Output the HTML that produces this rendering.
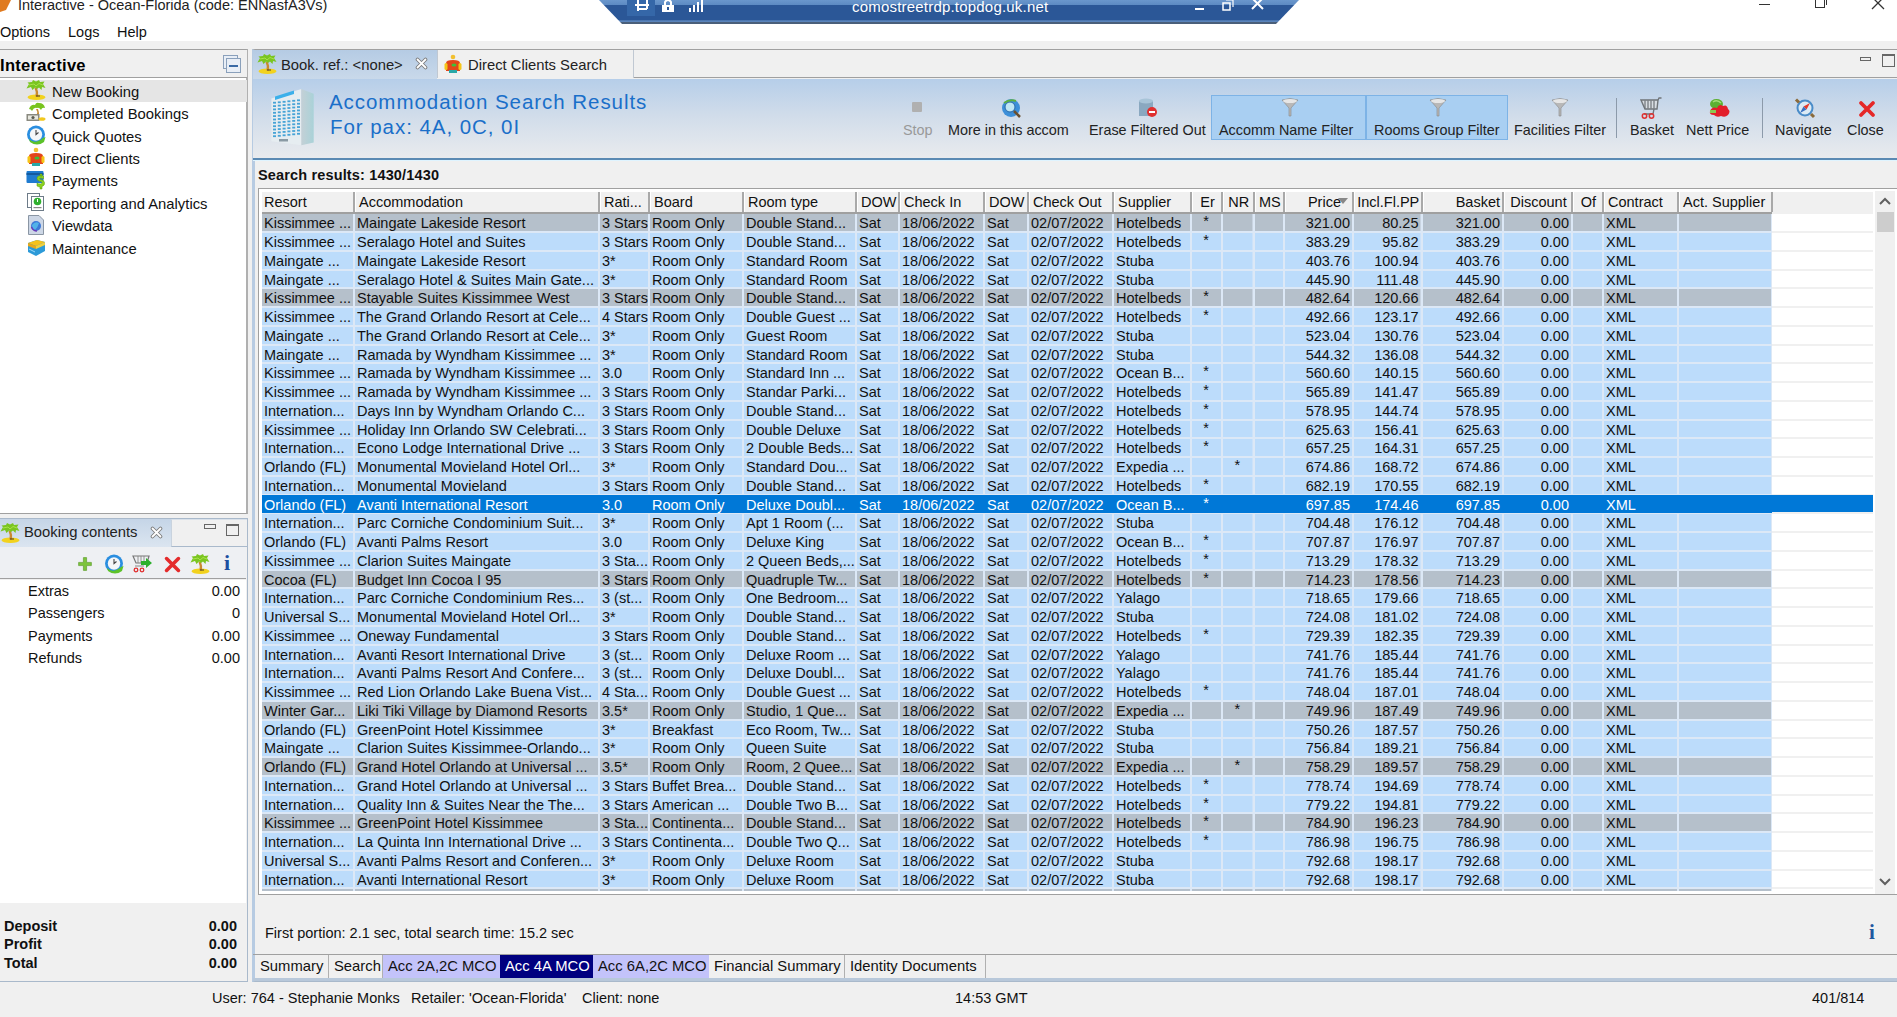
<!DOCTYPE html><html><head><meta charset="utf-8"><style>
*{margin:0;padding:0;box-sizing:border-box}
html,body{width:1897px;height:1017px;overflow:hidden;background:#f0f0f0;font-family:"Liberation Sans",sans-serif;font-size:14.5px;color:#111}
.a{position:absolute}
.t{position:absolute;white-space:nowrap;line-height:18px}
.row{position:absolute;left:262px;width:1510px;height:18.75px;background:#dce8f6}
.c{position:absolute;top:0;height:16.75px;white-space:nowrap;clip-path:inset(-6px 0 -6px 0);line-height:19.2px;padding:0 3px 0 2px}
.rb .c{background:#bcdcfb}
.rg .c{background:#b5c0cb}
.rs{background:#0078d7}
.rs .c{background:#0078d7;color:#fff}
.r{text-align:right;padding-right:2px}
.ce{text-align:center}
.hd{position:absolute;top:192px;height:20px;background:#f0f0f0;line-height:20px;padding:0 1px;white-space:nowrap;overflow:hidden;border-left:1px solid #fff}
.hs{position:absolute;top:192px;width:2px;height:21px;background:#a9a9a9}
.wl{position:absolute;left:1772px;width:101px;height:2px;background:#f0f0f0}
.tbico{position:absolute}
</style></head><body><svg width="0" height="0" style="position:absolute"><defs>
<symbol id="palm" viewBox="0 0 20 20"><ellipse cx="10.5" cy="17.2" rx="9" ry="2.8" fill="#f2d21e"/><path d="M8.5 8 Q10.5 12 9.5 16.5 L12 16.5 Q12.5 11 11 8Z" fill="#c98a2e"/><path d="M0.5 8.5 L3 4 L1.5 2.5 L6 2 L7 0 L10 1.5 L13 0 L14 2 L18.5 1.5 L17 4 L19.5 8 L16 7 L15.5 10 L13 7.5 L11 9 L9 7.5 L6.5 10 L5 7 Z" fill="#7ac520"/><path d="M3 5 L8 4 L10 6 L13 3.5 L17 5" stroke="#a8e24a" stroke-width="1" fill="none"/><path d="M10 16 L14 16" stroke="#4a3a20" stroke-width="1"/></symbol>
<symbol id="compl" viewBox="0 0 20 20"><path d="M3 7 Q5 2 9 3 Q10 0 13 1 Q18 1 19 6 Q16 5 15 8 Q13 5 11 6 Q8 5 6 9 Q5 7 3 7Z" fill="#78c41e"/><path d="M10 7 Q12 10 11 12 L13 12 Q13 10 12 7Z" fill="#c98a2e"/><rect x="0.5" y="12" width="13" height="7" fill="#8a8a80"/><rect x="2" y="13.5" width="10" height="4" fill="#e8e8e0"/><circle cx="7" cy="15.5" r="1.6" fill="#5a5a50"/><ellipse cx="16" cy="17" rx="3.5" ry="1.8" fill="#f2c81e"/></symbol>
<symbol id="clock" viewBox="0 0 20 20"><circle cx="10" cy="9.5" r="9" fill="#2a8ee0"/><circle cx="10" cy="9.5" r="6.2" fill="#f4f6f8"/><path d="M10 5 V9.5 L12.5 7.5" stroke="#444" stroke-width="1.1" fill="none"/><path d="M3 14 Q9 20 17 13 L19.5 12 L18 17 Q11 22 4 17Z" fill="#5cc22a"/></symbol>
<symbol id="person" viewBox="0 0 20 20"><circle cx="10" cy="3" r="2.3" fill="#f2c030"/><path d="M3 9 Q3 6 10 6 Q17 6 17 9 L17 17 L3 17Z" fill="#e2461a"/><rect x="1.5" y="9" width="3" height="7" rx="1.5" fill="#f5c518"/><rect x="15.5" y="9" width="3" height="7" rx="1.5" fill="#f5c518"/><ellipse cx="11" cy="11" rx="2.5" ry="1.5" fill="#3cbf3c"/><rect x="6" y="16" width="8" height="3" fill="#2aa8a8"/></symbol>
<symbol id="pay" viewBox="0 0 20 20"><rect x="0.5" y="1" width="17" height="12" rx="1" fill="#1f7bd0"/><rect x="0.5" y="3" width="17" height="2" fill="#135a9e"/><path d="M16 6 Q11 5 11 8.5 Q11 11 15 11.5 Q17 12.5 15 14 Q12 14 11 13 L11 16 Q13 17 14 17 L14 19 L16 19 L16 16.5 Q19 15.5 18.5 12.5 Q18 10 14.5 9.5 Q13 9 14 8 Q16 8 17.5 9 L17.5 6 Q17 5.5 16 5.5 L16 4 L14 4 L14 5.6Z" fill="#8cd21e" stroke="#5a9a10" stroke-width="0.5"/></symbol>
<symbol id="report" viewBox="0 0 20 20"><rect x="1.5" y="1.5" width="12" height="14" fill="#fff" stroke="#6d7b88"/><rect x="5.5" y="4.5" width="12" height="14" fill="#fff" stroke="#6d7b88"/><circle cx="11.5" cy="9.5" r="3.8" fill="#2fb02f"/><rect x="11" y="7" width="1" height="3" fill="#fff"/><rect x="7.5" y="15" width="8" height="1.2" fill="#888"/></symbol>
<symbol id="viewd" viewBox="0 0 20 20"><path d="M2.5 0.5 H13 L17.5 5 V19.5 H2.5Z" fill="#cdd7e6" stroke="#8a96a4"/><circle cx="10" cy="11" r="5" fill="#3c78d8"/><path d="M6 10 Q9 6 13 8 Q12 12 9 15 Q6 14 6 10Z" fill="#52b2e8"/><path d="M5.5 12 Q7 16 11 16" stroke="#6a3ab8" stroke-width="1.4" fill="none"/></symbol>
<symbol id="maint" viewBox="0 0 20 20"><path d="M2 6 L11 3 L19 5 L19 14 L10 19 L2 15Z" fill="#2c9ad8"/><path d="M2 6 L11 3 L19 5 L10 9Z" fill="#f5c21c"/><path d="M2 6 L10 9 L10 12 L2 9Z" fill="#e8a818"/><path d="M10 9 L19 5 L19 8 L10 12Z" fill="#f0d040"/><path d="M3 12 L9 15" stroke="#9ad8f8" stroke-width="1"/></symbol>
<symbol id="plus" viewBox="0 0 20 20"><path d="M8 2 H12 V8 H18 V12 H12 V18 H8 V12 H2 V8 H8Z" fill="#7cc43a" stroke="#5a9a2a" stroke-width="0.8"/></symbol>
<symbol id="xred" viewBox="0 0 20 20"><path d="M3 3 L17 17 M17 3 L3 17" stroke="#e42b2b" stroke-width="4.2" stroke-linecap="round"/></symbol>
<symbol id="cartg" viewBox="0 0 20 20"><path d="M1 2 H17 L15 9 H4Z" fill="none" stroke="#777" stroke-width="1.2"/><path d="M6 2 V9 M9 2 V9 M12 2 V9" stroke="#888" stroke-width="0.9"/><path d="M3 12 H12" stroke="#888" stroke-width="1"/><circle cx="4" cy="16" r="1.8" fill="none" stroke="#e03030" stroke-width="1.3"/><circle cx="10" cy="16" r="1.8" fill="none" stroke="#e03030" stroke-width="1.3"/><path d="M9 7 H14 V4 L20 9 L14 14 V11 H9Z" fill="#2cb02c"/></symbol>
</defs></svg><div class="a" style="left:0;top:0;width:1897px;height:41px;background:#fff"></div>
<svg class="a" style="left:0;top:0" width="12" height="12"><path d="M0 0 L11 0 L6 10 L0 12Z" fill="#e07a1f"/></svg>
<div class="t" style="left:18px;top:-4px;font-size:14.5px;color:#222">Interactive - Ocean-Florida (code: ENNasfA3Vs)</div>
<div class="t" style="left:0;top:22.7px;font-size:14.5px">Options</div>
<div class="t" style="left:68px;top:22.7px;font-size:14.5px">Logs</div>
<div class="t" style="left:117px;top:22.7px;font-size:14.5px">Help</div>
<div class="a" style="left:1759px;top:4px;width:11px;height:1px;background:#333"></div>
<div class="a" style="left:1815px;top:0px;width:10px;height:8px;border:1px solid #333;border-top:none"></div>
<div class="a" style="left:1818px;top:-3px;width:9px;height:8px;border-right:1px solid #333"></div>
<svg class="a" style="left:1871px;top:0" width="14" height="10"><path d="M1 -3 L13 9 M13 -3 L1 9" stroke="#333" stroke-width="1.3"/></svg>
<svg class="a" style="left:598px;top:0" width="702" height="26">
<defs><linearGradient id="rdp" x1="0" y1="0" x2="0" y2="1"><stop offset="0" stop-color="#6a97cc"/><stop offset="0.2" stop-color="#5d8bc3"/><stop offset="0.22" stop-color="#2b5797"/><stop offset="0.84" stop-color="#2b5797"/><stop offset="0.86" stop-color="#5a84bb"/><stop offset="0.92" stop-color="#5a84bb"/><stop offset="0.93" stop-color="#4a5f7a"/><stop offset="1" stop-color="#4a5f7a"/></linearGradient></defs>
<path d="M1 0 L701 0 L678 24 L24 24 Z" fill="url(#rdp)"/>
</svg>
<div class="a" style="left:627px;top:0;width:28px;height:16px;background:#3567a8"></div>
<svg class="a" style="left:634px;top:0" width="16" height="12"><path d="M1 5 H15 M4 0 V11 M13 0 V9 M4 9 H13" stroke="#fff" stroke-width="2" fill="none"/></svg>
<svg class="a" style="left:661px;top:0" width="14" height="13"><rect x="1" y="5" width="12" height="7" fill="#fff"/><path d="M4 5 V2 Q7 -2 10 2 V5" stroke="#fff" stroke-width="2" fill="none"/><rect x="6" y="7" width="2" height="3" fill="#2b5797"/></svg>
<svg class="a" style="left:689px;top:0" width="15" height="13"><rect x="0" y="8" width="2" height="4" fill="#fff"/><rect x="4" y="5" width="2" height="7" fill="#fff"/><rect x="8" y="2" width="2" height="10" fill="#fff"/><rect x="12" y="0" width="2" height="12" fill="#fff"/></svg>
<div class="t" style="left:852px;top:-2px;font-size:15px;color:#fff;letter-spacing:0.2px">comostreetrdp.topdog.uk.net</div>
<div class="a" style="left:1195px;top:8px;width:9px;height:2px;background:#fff"></div>
<svg class="a" style="left:1222px;top:0" width="13" height="11"><rect x="1" y="3" width="7" height="7" stroke="#fff" stroke-width="1.5" fill="none"/><path d="M4 0 H11 V7" stroke="#fff" stroke-width="1.2" fill="none"/></svg>
<svg class="a" style="left:1251px;top:0" width="13" height="10"><path d="M1 -2 L12 9 M12 -2 L1 9" stroke="#fff" stroke-width="2"/></svg>
<div class="a" style="left:0;top:49px;width:248px;height:465px;border:1px solid #a0a0a0;border-right:2px solid #b0b0b0;border-left:none;background:#fff"></div>
<div class="a" style="left:0;top:50px;width:247px;height:28px;background:#f0f0f0;border-bottom:1px solid #a0a0a0"></div>
<div class="t" style="left:0;top:55.5px;font-weight:bold;font-size:16.5px;letter-spacing:0.3px;color:#000">Interactive</div>
<svg class="a" style="left:223px;top:55px" width="18" height="18"><rect x="0.5" y="0.5" width="14" height="13" fill="#e8eef6" stroke="#8aa0bb"/><rect x="3.5" y="3.5" width="14" height="14" fill="#e8eef6" stroke="#8aa0bb"/><rect x="6" y="10" width="9" height="2" fill="#3a6aa5"/></svg>
<div class="a" style="left:0;top:79.5px;width:247px;height:22.5px;background:#e5e5e5"></div>
<div class="t" style="left:52px;top:82.6px;font-size:14.8px">New Booking</div>
<svg class="a" style="left:26px;top:79.9px" width="20" height="20"><use href="#palm"/></svg>
<div class="t" style="left:52px;top:105.0px;font-size:14.8px">Completed Bookings</div>
<svg class="a" style="left:26px;top:102.3px" width="20" height="20"><use href="#compl"/></svg>
<div class="t" style="left:52px;top:127.5px;font-size:14.8px">Quick Quotes</div>
<svg class="a" style="left:26px;top:124.8px" width="20" height="20"><use href="#clock"/></svg>
<div class="t" style="left:52px;top:149.9px;font-size:14.8px">Direct Clients</div>
<svg class="a" style="left:26px;top:147.2px" width="20" height="20"><use href="#person"/></svg>
<div class="t" style="left:52px;top:172.3px;font-size:14.8px">Payments</div>
<svg class="a" style="left:26px;top:169.6px" width="20" height="20"><use href="#pay"/></svg>
<div class="t" style="left:52px;top:194.8px;font-size:14.8px">Reporting and Analytics</div>
<svg class="a" style="left:26px;top:192.1px" width="20" height="20"><use href="#report"/></svg>
<div class="t" style="left:52px;top:217.2px;font-size:14.8px">Viewdata</div>
<svg class="a" style="left:26px;top:214.5px" width="20" height="20"><use href="#viewd"/></svg>
<div class="t" style="left:52px;top:239.6px;font-size:14.8px">Maintenance</div>
<svg class="a" style="left:26px;top:236.9px" width="20" height="20"><use href="#maint"/></svg>
<div class="a" style="left:0;top:518px;width:248px;height:464px;border:1px solid #a9b9cb;border-left:none;background:#f0f0f0"></div>
<div class="a" style="left:0;top:519px;width:171px;height:28px;background:linear-gradient(#c5d5e7,#dbe5f0)"></div>
<div class="a" style="left:171px;top:519px;width:76px;height:28px;background:#f0f0f0;border-left:1px solid #c9d3de;border-bottom:1px solid #a9b9cb;border-top:1px solid #d9e1ea"></div>
<div class="t" style="left:24px;top:523px;font-size:14.8px;color:#222">Booking contents</div>
<svg class="a" style="left:150px;top:526px" width="13" height="13"><path d="M2.5 2.5 L10.5 10.5 M10.5 2.5 L2.5 10.5" stroke="#7a7a7a" stroke-width="3.6" stroke-linecap="round"/><path d="M2.5 2.5 L10.5 10.5 M10.5 2.5 L2.5 10.5" stroke="#fff" stroke-width="1.8" stroke-linecap="round"/></svg>
<div class="a" style="left:204px;top:524px;width:12px;height:5px;border:1px solid #666"></div>
<div class="a" style="left:226px;top:524px;width:13px;height:12px;border:1px solid #666;border-top-width:2px"></div>
<div class="a" style="left:0;top:547px;width:246px;height:32px;background:#eef0f3;border-bottom:1px solid #a0a0a0"></div>
<div class="a" style="left:0;top:580px;width:246px;height:323px;background:#fff"></div>
<div class="t" style="left:28px;top:582.0px">Extras</div>
<div class="t" style="left:140px;width:100px;text-align:right;top:582.0px">0.00</div>
<div class="t" style="left:28px;top:604.4px">Passengers</div>
<div class="t" style="left:140px;width:100px;text-align:right;top:604.4px">0</div>
<div class="t" style="left:28px;top:626.9px">Payments</div>
<div class="t" style="left:140px;width:100px;text-align:right;top:626.9px">0.00</div>
<div class="t" style="left:28px;top:649.3px">Refunds</div>
<div class="t" style="left:140px;width:100px;text-align:right;top:649.3px">0.00</div>
<div class="t" style="left:4px;top:916.5px;font-weight:bold">Deposit</div>
<div class="t" style="left:140px;width:97px;text-align:right;top:916.5px;font-weight:bold">0.00</div>
<div class="t" style="left:4px;top:935.3px;font-weight:bold">Profit</div>
<div class="t" style="left:140px;width:97px;text-align:right;top:935.3px;font-weight:bold">0.00</div>
<div class="t" style="left:4px;top:954.1px;font-weight:bold">Total</div>
<div class="t" style="left:140px;width:97px;text-align:right;top:954.1px;font-weight:bold">0.00</div>
<div class="a" style="left:252px;top:49px;width:1645px;height:933px;border:1px solid #a9b9cb;border-left:3px solid #b7cbe2;border-top-color:#a0a0a0;border-right:none;background:#f0f0f0"></div>
<div class="a" style="left:253px;top:50px;width:1644px;height:28px;background:#f0f0f0;border-bottom:1px solid #a0a0a0"></div>
<div class="a" style="left:253px;top:50px;width:184px;height:29px;background:linear-gradient(#b5cbe4,#c9d9ea)"></div>
<div class="a" style="left:437px;top:50px;width:197px;height:28px;background:#f0f0f0;border-left:1px solid #c0c8d2;border-right:1px solid #c0c8d2"></div>
<div class="t" style="left:281px;top:56px;font-size:14.8px;color:#222">Book. ref.: &lt;none&gt;</div>
<svg class="a" style="left:257px;top:54px" width="20" height="20"><use href="#palm"/></svg>
<svg class="a" style="left:443px;top:54px" width="20" height="20"><use href="#person"/></svg>
<svg class="a" style="left:0px;top:523px" width="20" height="20"><use href="#palm"/></svg>
<svg class="a" style="left:77px;top:555.5px" width="16" height="16"><use href="#plus"/></svg>
<svg class="a" style="left:104px;top:553.5px" width="20" height="20"><use href="#clock"/></svg>
<svg class="a" style="left:132px;top:553.5px" width="20" height="20"><use href="#cartg"/></svg>
<svg class="a" style="left:163.5px;top:555.5px" width="17" height="17"><use href="#xred"/></svg>
<svg class="a" style="left:190px;top:554px" width="20" height="20"><use href="#palm"/></svg>
<div class="t" style="left:224px;top:554px;font-family:'Liberation Serif',serif;font-weight:bold;font-size:22px;color:#1c4fa0">i</div>
<svg class="a" style="left:415px;top:57px" width="13" height="13"><path d="M2.5 2.5 L10.5 10.5 M10.5 2.5 L2.5 10.5" stroke="#7a7a7a" stroke-width="3.6" stroke-linecap="round"/><path d="M2.5 2.5 L10.5 10.5 M10.5 2.5 L2.5 10.5" stroke="#fff" stroke-width="1.8" stroke-linecap="round"/></svg>
<div class="t" style="left:468px;top:56px;font-size:14.8px;color:#222">Direct Clients Search</div>
<div class="a" style="left:1860px;top:57px;width:11px;height:4px;border:1px solid #666"></div>
<div class="a" style="left:1882px;top:54px;width:13px;height:13px;border:1px solid #666;border-top-width:2px"></div>
<div class="a" style="left:253px;top:79px;width:1644px;height:80.5px;background:linear-gradient(#b6cee9 0%,#d0dcea 45%,#e9ebee 100%);border-bottom:2px solid #5b8ab3;box-shadow:0 1px 0 #dff4ff"></div>
<div class="t" style="left:329px;top:89px;font-size:20.5px;letter-spacing:0.95px;color:#1a6fc9;line-height:26px">Accommodation Search Results</div>
<div class="t" style="left:330px;top:114px;font-size:20.5px;letter-spacing:0.95px;color:#1a6fc9;line-height:26px">For pax: 4A, 0C, 0I</div>
<svg class="a" style="left:260px;top:82px" width="70" height="70"><defs><linearGradient id="rf" x1="0" y1="0" x2="1" y2="0"><stop offset="0" stop-color="#c4d0d6"/><stop offset="1" stop-color="#a9d2d8"/></linearGradient></defs><path d="M11.4 16.5 L41.3 6.9 L41.3 63.3 L11.4 59.2Z" fill="#e6edf1"/><path d="M41.3 6.9 L53.7 11.7 L53.7 60.6 L41.3 63.3Z" fill="url(#rf)"/><path d="M15 14.5 L34 8.5 L34 12 L15 18Z" fill="#3cb0ea"/><rect x="13.0" y="19.8" width="3" height="1.8" fill="#47a3d6"/><rect x="13.0" y="23.2" width="3" height="1.8" fill="#47a3d6"/><rect x="13.0" y="26.5" width="3" height="1.8" fill="#47a3d6"/><rect x="13.0" y="29.9" width="3" height="1.8" fill="#47a3d6"/><rect x="13.0" y="33.2" width="3" height="1.8" fill="#47a3d6"/><rect x="13.0" y="36.6" width="3" height="1.8" fill="#47a3d6"/><rect x="13.0" y="39.9" width="3" height="1.8" fill="#47a3d6"/><rect x="13.0" y="43.3" width="3" height="1.8" fill="#47a3d6"/><rect x="13.0" y="46.6" width="3" height="1.8" fill="#47a3d6"/><rect x="13.0" y="50.0" width="3" height="1.8" fill="#47a3d6"/><rect x="13.0" y="53.3" width="3" height="1.8" fill="#47a3d6"/><rect x="17.8" y="19.4" width="3" height="1.8" fill="#47a3d6"/><rect x="17.8" y="22.7" width="3" height="1.8" fill="#47a3d6"/><rect x="17.8" y="26.1" width="3" height="1.8" fill="#47a3d6"/><rect x="17.8" y="29.4" width="3" height="1.8" fill="#47a3d6"/><rect x="17.8" y="32.8" width="3" height="1.8" fill="#47a3d6"/><rect x="17.8" y="36.1" width="3" height="1.8" fill="#47a3d6"/><rect x="17.8" y="39.5" width="3" height="1.8" fill="#47a3d6"/><rect x="17.8" y="42.8" width="3" height="1.8" fill="#47a3d6"/><rect x="17.8" y="46.2" width="3" height="1.8" fill="#47a3d6"/><rect x="17.8" y="49.5" width="3" height="1.8" fill="#47a3d6"/><rect x="17.8" y="52.9" width="3" height="1.8" fill="#47a3d6"/><rect x="22.6" y="18.9" width="3" height="1.8" fill="#47a3d6"/><rect x="22.6" y="22.2" width="3" height="1.8" fill="#47a3d6"/><rect x="22.6" y="25.6" width="3" height="1.8" fill="#47a3d6"/><rect x="22.6" y="28.9" width="3" height="1.8" fill="#47a3d6"/><rect x="22.6" y="32.3" width="3" height="1.8" fill="#47a3d6"/><rect x="22.6" y="35.6" width="3" height="1.8" fill="#47a3d6"/><rect x="22.6" y="39.0" width="3" height="1.8" fill="#47a3d6"/><rect x="22.6" y="42.3" width="3" height="1.8" fill="#47a3d6"/><rect x="22.6" y="45.7" width="3" height="1.8" fill="#47a3d6"/><rect x="22.6" y="49.0" width="3" height="1.8" fill="#47a3d6"/><rect x="22.6" y="52.4" width="3" height="1.8" fill="#47a3d6"/><rect x="27.4" y="18.4" width="3" height="1.8" fill="#47a3d6"/><rect x="27.4" y="21.8" width="3" height="1.8" fill="#47a3d6"/><rect x="27.4" y="25.1" width="3" height="1.8" fill="#47a3d6"/><rect x="27.4" y="28.4" width="3" height="1.8" fill="#47a3d6"/><rect x="27.4" y="31.8" width="3" height="1.8" fill="#47a3d6"/><rect x="27.4" y="35.1" width="3" height="1.8" fill="#47a3d6"/><rect x="27.4" y="38.5" width="3" height="1.8" fill="#47a3d6"/><rect x="27.4" y="41.8" width="3" height="1.8" fill="#47a3d6"/><rect x="27.4" y="45.2" width="3" height="1.8" fill="#47a3d6"/><rect x="27.4" y="48.5" width="3" height="1.8" fill="#47a3d6"/><rect x="27.4" y="51.9" width="3" height="1.8" fill="#47a3d6"/><rect x="32.2" y="17.9" width="3" height="1.8" fill="#47a3d6"/><rect x="32.2" y="21.3" width="3" height="1.8" fill="#47a3d6"/><rect x="32.2" y="24.6" width="3" height="1.8" fill="#47a3d6"/><rect x="32.2" y="28.0" width="3" height="1.8" fill="#47a3d6"/><rect x="32.2" y="31.3" width="3" height="1.8" fill="#47a3d6"/><rect x="32.2" y="34.7" width="3" height="1.8" fill="#47a3d6"/><rect x="32.2" y="38.0" width="3" height="1.8" fill="#47a3d6"/><rect x="32.2" y="41.4" width="3" height="1.8" fill="#47a3d6"/><rect x="32.2" y="44.7" width="3" height="1.8" fill="#47a3d6"/><rect x="32.2" y="48.1" width="3" height="1.8" fill="#47a3d6"/><rect x="32.2" y="51.4" width="3" height="1.8" fill="#47a3d6"/><rect x="37.0" y="17.4" width="3" height="1.8" fill="#47a3d6"/><rect x="37.0" y="20.8" width="3" height="1.8" fill="#47a3d6"/><rect x="37.0" y="24.1" width="3" height="1.8" fill="#47a3d6"/><rect x="37.0" y="27.5" width="3" height="1.8" fill="#47a3d6"/><rect x="37.0" y="30.8" width="3" height="1.8" fill="#47a3d6"/><rect x="37.0" y="34.2" width="3" height="1.8" fill="#47a3d6"/><rect x="37.0" y="37.5" width="3" height="1.8" fill="#47a3d6"/><rect x="37.0" y="40.9" width="3" height="1.8" fill="#47a3d6"/><rect x="37.0" y="44.2" width="3" height="1.8" fill="#47a3d6"/><rect x="37.0" y="47.6" width="3" height="1.8" fill="#47a3d6"/><rect x="37.0" y="50.9" width="3" height="1.8" fill="#47a3d6"/><rect x="19" y="57" width="9" height="2.5" fill="#8a9aa4"/></svg>
<div class="a" style="left:1211px;top:95px;width:155px;height:45px;background:#a9cff2;border:1px solid #7db3e6"></div>
<div class="a" style="left:1366px;top:95px;width:142px;height:45px;background:#a9cff2;border:1px solid #7db3e6"></div>
<div class="t" style="left:903px;top:121px;font-size:14.4px;color:#999">Stop</div>
<div class="t" style="left:948px;top:121px;font-size:14.4px;color:#222">More in this accom</div>
<div class="t" style="left:1089px;top:121px;font-size:14.4px;color:#222">Erase Filtered Out</div>
<div class="t" style="left:1219px;top:121px;font-size:14.4px;color:#222">Accomm Name Filter</div>
<div class="t" style="left:1374px;top:121px;font-size:14.4px;color:#222">Rooms Group Filter</div>
<div class="t" style="left:1514px;top:121px;font-size:14.4px;color:#222">Facilities Filter</div>
<div class="t" style="left:1630px;top:121px;font-size:14.4px;color:#222">Basket</div>
<div class="t" style="left:1686px;top:121px;font-size:14.4px;color:#222">Nett Price</div>
<div class="t" style="left:1775px;top:121px;font-size:14.4px;color:#222">Navigate</div>
<div class="t" style="left:1847px;top:121px;font-size:14.4px;color:#222">Close</div>
<div class="a" style="left:1616px;top:98px;width:1px;height:40px;background:#8c9aaa"></div>
<div class="a" style="left:1762px;top:98px;width:1px;height:40px;background:#8c9aaa"></div>
<div class="a" style="left:912px;top:102px;width:10px;height:10px;background:#b0b0b0;border-radius:1px"></div>
<svg class="a" style="left:1000px;top:97px" width="24" height="22"><circle cx="11" cy="11" r="9" fill="#3d8fd8"/><circle cx="10" cy="10" r="5" fill="#bfe6f3" stroke="#2a6aa8"/><path d="M14 14 L20 20" stroke="#6a5030" stroke-width="2.5"/><path d="M4 6 Q10 2 16 4" stroke="#5cb040" stroke-width="2" fill="none"/></svg>
<svg class="a" style="left:1137px;top:97px" width="22" height="22"><path d="M2 4 H16 V19 H2Z" fill="#8aa8c0"/><ellipse cx="9" cy="4" rx="7" ry="2.5" fill="#a8c4d8"/><circle cx="15" cy="15" r="5" fill="#e03030"/><rect x="12" y="14" width="6" height="2" fill="#fff"/></svg>
<svg class="a" style="left:1280px;top:98px" width="20" height="20"><path d="M2 2 Q10 -1 18 2 L11 10 L11 18 L9 18 L9 10 Z" fill="#b8b8b8" stroke="#888" stroke-width="0.6"/><ellipse cx="10" cy="3" rx="7" ry="2" fill="#e6e6e6"/></svg>
<svg class="a" style="left:1428px;top:98px" width="20" height="20"><path d="M2 2 Q10 -1 18 2 L11 10 L11 18 L9 18 L9 10 Z" fill="#b8b8b8" stroke="#888" stroke-width="0.6"/><ellipse cx="10" cy="3" rx="7" ry="2" fill="#e6e6e6"/></svg>
<svg class="a" style="left:1550px;top:98px" width="20" height="20"><path d="M2 2 Q10 -1 18 2 L11 10 L11 18 L9 18 L9 10 Z" fill="#b8b8b8" stroke="#888" stroke-width="0.6"/><ellipse cx="10" cy="3" rx="7" ry="2" fill="#e6e6e6"/></svg>
<svg class="a" style="left:1640px;top:97px" width="22" height="24"><path d="M1 3 H18 L17 12 H5Z" fill="#d8dde2" stroke="#6f7478" stroke-width="1.4"/><path d="M5 3.5 V11.5 M8 3.5 V11.5 M11 3.5 V11.5 M14 3.5 V11.5" stroke="#6f7478" stroke-width="1.2"/><path d="M18 3 L19 1 H21.5 M14 12 L13 17 H4" stroke="#6f7478" stroke-width="1.3" fill="none"/><circle cx="4.5" cy="19" r="2.2" fill="none" stroke="#e03232" stroke-width="1.5"/><circle cx="11.5" cy="19" r="2.2" fill="none" stroke="#e03232" stroke-width="1.5"/></svg>
<svg class="a" style="left:1708px;top:97px" width="24" height="22"><ellipse cx="8.5" cy="7" rx="6.5" ry="5" fill="#5cb032"/><path d="M5 5 Q9 2 13 6" stroke="#a6dc78" stroke-width="1.5" fill="none"/><path d="M2 14 Q4 9 9 11 Q11 6 15 9 Q19 7 20 12 Q23 14 20 18 Q17 21 13 19 Q9 21 6 18 Q1 18 2 14Z" fill="#e21e2a"/><rect x="2" y="13" width="6" height="3" fill="#8cc850"/></svg>
<svg class="a" style="left:1794px;top:97px" width="24" height="24"><circle cx="11" cy="11" r="7.5" fill="#dcebf5" stroke="#4a8cc8" stroke-width="2"/><path d="M16 6 L12.5 12.5 L9.5 9.5Z" fill="#e23a2a"/><path d="M6 16 L9.5 9.5 L12.5 12.5Z" fill="#3a70c0"/><path d="M2 2.5 L5 5.5" stroke="#8a6a3a" stroke-width="3"/><path d="M17 17 L20 20" stroke="#8a6a3a" stroke-width="3"/></svg>
<svg class="a" style="left:1858px;top:100px" width="18" height="18"><path d="M3 3 L15 15 M15 3 L3 15" stroke="#e52828" stroke-width="3.8" stroke-linecap="round"/></svg>
<div class="t" style="left:258px;top:166px;font-weight:bold;font-size:14.5px;letter-spacing:0.15px;color:#111">Search results: 1430/1430</div>
<div class="a" style="left:258px;top:187.5px;width:1639px;height:707px;border:1px solid #a0a0a0;border-right:none;background:#fff"></div>
<div class="a" style="left:262px;top:191px;width:1611px;height:1px;background:#fff"></div>
<div class="a" style="left:262px;top:192px;width:1611px;height:20px;background:#f0f0f0"></div>
<div class="hd" style="left:263px;width:91px;text-align:left;padding-left:1px;border-left:none;">Resort</div>
<div class="hd" style="left:355px;width:244px;text-align:left;padding-left:3px;">Accommodation</div>
<div class="hd" style="left:600px;width:49px;text-align:left;padding-left:3px;">Rati...</div>
<div class="hd" style="left:650px;width:93px;text-align:left;padding-left:3px;">Board</div>
<div class="hd" style="left:744px;width:112px;text-align:left;padding-left:3px;">Room type</div>
<div class="hd" style="left:857px;width:42px;text-align:left;padding-left:3px;">DOW</div>
<div class="hd" style="left:900px;width:84px;text-align:left;padding-left:3px;">Check In</div>
<div class="hd" style="left:985px;width:43px;text-align:left;padding-left:3px;">DOW</div>
<div class="hd" style="left:1029px;width:84px;text-align:left;padding-left:3px;">Check Out</div>
<div class="hd" style="left:1114px;width:77px;text-align:left;padding-left:3px;">Supplier</div>
<div class="hd" style="left:1192px;width:30px;text-align:center;">Er</div>
<div class="hd" style="left:1223px;width:30.5px;text-align:center;">NR</div>
<div class="hd" style="left:1254.5px;width:29.5px;text-align:center;">MS</div>
<div class="hd" style="left:1285px;width:68px;text-align:right;padding-right:12px;">Price</div>
<div class="hd" style="left:1354px;width:67.5px;text-align:center;">Incl.Fl.PP</div>
<div class="hd" style="left:1422.5px;width:80.5px;text-align:right;padding-right:3px;">Basket</div>
<div class="hd" style="left:1504px;width:68px;text-align:center;">Discount</div>
<div class="hd" style="left:1573px;width:30px;text-align:center;">Of</div>
<div class="hd" style="left:1604px;width:74px;text-align:left;padding-left:3px;">Contract</div>
<div class="hd" style="left:1679px;width:93px;text-align:left;padding-left:3px;">Act. Supplier</div>
<div class="hs" style="left:353px"></div>
<div class="hs" style="left:598px"></div>
<div class="hs" style="left:648px"></div>
<div class="hs" style="left:742px"></div>
<div class="hs" style="left:855px"></div>
<div class="hs" style="left:898px"></div>
<div class="hs" style="left:983px"></div>
<div class="hs" style="left:1027px"></div>
<div class="hs" style="left:1112px"></div>
<div class="hs" style="left:1190px"></div>
<div class="hs" style="left:1221px"></div>
<div class="hs" style="left:1252.5px"></div>
<div class="hs" style="left:1283px"></div>
<div class="hs" style="left:1352px"></div>
<div class="hs" style="left:1420.5px"></div>
<div class="hs" style="left:1502px"></div>
<div class="hs" style="left:1571px"></div>
<div class="hs" style="left:1602px"></div>
<div class="hs" style="left:1677px"></div>
<div class="hs" style="left:1771px"></div>
<div class="a" style="left:262px;top:211.5px;width:1611px;height:2.8px;background:#a0a0a0"></div>
<svg class="a" style="left:1338px;top:198px" width="11" height="7"><path d="M0 0 H10 L5 6Z" fill="#888"/></svg>
<div class="a" style="left:262px;top:214.3px;width:1510px;height:677px;background:#dce8f6"></div>
<div class="a" style="left:0;top:0;width:1897px;height:891px;overflow:hidden;pointer-events:none">
<div class="wl" style="top:212.30px"></div>
<div class="a rg" style="left:262px;top:214.30px;width:1510px;height:16.75px;background:#dce8f6">
<div class="c" style="left:0px;width:91px;">Kissimmee ...</div>
<div class="c" style="left:93px;width:243px;">Maingate Lakeside Resort</div>
<div class="c" style="left:338px;width:48px;">3 Stars</div>
<div class="c" style="left:388px;width:92px;">Room Only</div>
<div class="c" style="left:482px;width:111px;">Double Stand...</div>
<div class="c" style="left:595px;width:41px;">Sat</div>
<div class="c" style="left:638px;width:83px;">18/06/2022</div>
<div class="c" style="left:723px;width:42px;">Sat</div>
<div class="c" style="left:767px;width:83px;">02/07/2022</div>
<div class="c" style="left:852px;width:76px;">Hotelbeds</div>
<div class="c ce" style="left:930px;width:29px;line-height:15px;">*</div>
<div class="c ce" style="left:961px;width:29.5px;line-height:15px;"></div>
<div class="c ce" style="left:992.5px;width:28.5px;line-height:15px;"></div>
<div class="c r" style="left:1023px;width:67px;">321.00</div>
<div class="c r" style="left:1092px;width:66.5px;">80.25</div>
<div class="c r" style="left:1160.5px;width:79.5px;">321.00</div>
<div class="c r" style="left:1242px;width:67px;">0.00</div>
<div class="c" style="left:1311px;width:29px;"></div>
<div class="c" style="left:1342px;width:73px;">XML</div>
<div class="c" style="left:1417px;width:92px;"></div>
</div>
<div class="wl" style="top:231.05px"></div>
<div class="a rb" style="left:262px;top:233.05px;width:1510px;height:16.75px;background:#dce8f6">
<div class="c" style="left:0px;width:91px;">Kissimmee ...</div>
<div class="c" style="left:93px;width:243px;">Seralago Hotel and Suites</div>
<div class="c" style="left:338px;width:48px;">3 Stars</div>
<div class="c" style="left:388px;width:92px;">Room Only</div>
<div class="c" style="left:482px;width:111px;">Double Stand...</div>
<div class="c" style="left:595px;width:41px;">Sat</div>
<div class="c" style="left:638px;width:83px;">18/06/2022</div>
<div class="c" style="left:723px;width:42px;">Sat</div>
<div class="c" style="left:767px;width:83px;">02/07/2022</div>
<div class="c" style="left:852px;width:76px;">Hotelbeds</div>
<div class="c ce" style="left:930px;width:29px;line-height:15px;">*</div>
<div class="c ce" style="left:961px;width:29.5px;line-height:15px;"></div>
<div class="c ce" style="left:992.5px;width:28.5px;line-height:15px;"></div>
<div class="c r" style="left:1023px;width:67px;">383.29</div>
<div class="c r" style="left:1092px;width:66.5px;">95.82</div>
<div class="c r" style="left:1160.5px;width:79.5px;">383.29</div>
<div class="c r" style="left:1242px;width:67px;">0.00</div>
<div class="c" style="left:1311px;width:29px;"></div>
<div class="c" style="left:1342px;width:73px;">XML</div>
<div class="c" style="left:1417px;width:92px;"></div>
</div>
<div class="wl" style="top:249.80px"></div>
<div class="a rb" style="left:262px;top:251.80px;width:1510px;height:16.75px;background:#dce8f6">
<div class="c" style="left:0px;width:91px;">Maingate ...</div>
<div class="c" style="left:93px;width:243px;">Maingate Lakeside Resort</div>
<div class="c" style="left:338px;width:48px;">3*</div>
<div class="c" style="left:388px;width:92px;">Room Only</div>
<div class="c" style="left:482px;width:111px;">Standard Room</div>
<div class="c" style="left:595px;width:41px;">Sat</div>
<div class="c" style="left:638px;width:83px;">18/06/2022</div>
<div class="c" style="left:723px;width:42px;">Sat</div>
<div class="c" style="left:767px;width:83px;">02/07/2022</div>
<div class="c" style="left:852px;width:76px;">Stuba</div>
<div class="c ce" style="left:930px;width:29px;line-height:15px;"></div>
<div class="c ce" style="left:961px;width:29.5px;line-height:15px;"></div>
<div class="c ce" style="left:992.5px;width:28.5px;line-height:15px;"></div>
<div class="c r" style="left:1023px;width:67px;">403.76</div>
<div class="c r" style="left:1092px;width:66.5px;">100.94</div>
<div class="c r" style="left:1160.5px;width:79.5px;">403.76</div>
<div class="c r" style="left:1242px;width:67px;">0.00</div>
<div class="c" style="left:1311px;width:29px;"></div>
<div class="c" style="left:1342px;width:73px;">XML</div>
<div class="c" style="left:1417px;width:92px;"></div>
</div>
<div class="wl" style="top:268.55px"></div>
<div class="a rb" style="left:262px;top:270.55px;width:1510px;height:16.75px;background:#dce8f6">
<div class="c" style="left:0px;width:91px;">Maingate ...</div>
<div class="c" style="left:93px;width:243px;">Seralago Hotel &amp; Suites Main Gate...</div>
<div class="c" style="left:338px;width:48px;">3*</div>
<div class="c" style="left:388px;width:92px;">Room Only</div>
<div class="c" style="left:482px;width:111px;">Standard Room</div>
<div class="c" style="left:595px;width:41px;">Sat</div>
<div class="c" style="left:638px;width:83px;">18/06/2022</div>
<div class="c" style="left:723px;width:42px;">Sat</div>
<div class="c" style="left:767px;width:83px;">02/07/2022</div>
<div class="c" style="left:852px;width:76px;">Stuba</div>
<div class="c ce" style="left:930px;width:29px;line-height:15px;"></div>
<div class="c ce" style="left:961px;width:29.5px;line-height:15px;"></div>
<div class="c ce" style="left:992.5px;width:28.5px;line-height:15px;"></div>
<div class="c r" style="left:1023px;width:67px;">445.90</div>
<div class="c r" style="left:1092px;width:66.5px;">111.48</div>
<div class="c r" style="left:1160.5px;width:79.5px;">445.90</div>
<div class="c r" style="left:1242px;width:67px;">0.00</div>
<div class="c" style="left:1311px;width:29px;"></div>
<div class="c" style="left:1342px;width:73px;">XML</div>
<div class="c" style="left:1417px;width:92px;"></div>
</div>
<div class="wl" style="top:287.30px"></div>
<div class="a rg" style="left:262px;top:289.30px;width:1510px;height:16.75px;background:#dce8f6">
<div class="c" style="left:0px;width:91px;">Kissimmee ...</div>
<div class="c" style="left:93px;width:243px;">Stayable Suites Kissimmee West</div>
<div class="c" style="left:338px;width:48px;">3 Stars</div>
<div class="c" style="left:388px;width:92px;">Room Only</div>
<div class="c" style="left:482px;width:111px;">Double Stand...</div>
<div class="c" style="left:595px;width:41px;">Sat</div>
<div class="c" style="left:638px;width:83px;">18/06/2022</div>
<div class="c" style="left:723px;width:42px;">Sat</div>
<div class="c" style="left:767px;width:83px;">02/07/2022</div>
<div class="c" style="left:852px;width:76px;">Hotelbeds</div>
<div class="c ce" style="left:930px;width:29px;line-height:15px;">*</div>
<div class="c ce" style="left:961px;width:29.5px;line-height:15px;"></div>
<div class="c ce" style="left:992.5px;width:28.5px;line-height:15px;"></div>
<div class="c r" style="left:1023px;width:67px;">482.64</div>
<div class="c r" style="left:1092px;width:66.5px;">120.66</div>
<div class="c r" style="left:1160.5px;width:79.5px;">482.64</div>
<div class="c r" style="left:1242px;width:67px;">0.00</div>
<div class="c" style="left:1311px;width:29px;"></div>
<div class="c" style="left:1342px;width:73px;">XML</div>
<div class="c" style="left:1417px;width:92px;"></div>
</div>
<div class="wl" style="top:306.05px"></div>
<div class="a rb" style="left:262px;top:308.05px;width:1510px;height:16.75px;background:#dce8f6">
<div class="c" style="left:0px;width:91px;">Kissimmee ...</div>
<div class="c" style="left:93px;width:243px;">The Grand Orlando Resort at Cele...</div>
<div class="c" style="left:338px;width:48px;">4 Stars</div>
<div class="c" style="left:388px;width:92px;">Room Only</div>
<div class="c" style="left:482px;width:111px;">Double Guest ...</div>
<div class="c" style="left:595px;width:41px;">Sat</div>
<div class="c" style="left:638px;width:83px;">18/06/2022</div>
<div class="c" style="left:723px;width:42px;">Sat</div>
<div class="c" style="left:767px;width:83px;">02/07/2022</div>
<div class="c" style="left:852px;width:76px;">Hotelbeds</div>
<div class="c ce" style="left:930px;width:29px;line-height:15px;">*</div>
<div class="c ce" style="left:961px;width:29.5px;line-height:15px;"></div>
<div class="c ce" style="left:992.5px;width:28.5px;line-height:15px;"></div>
<div class="c r" style="left:1023px;width:67px;">492.66</div>
<div class="c r" style="left:1092px;width:66.5px;">123.17</div>
<div class="c r" style="left:1160.5px;width:79.5px;">492.66</div>
<div class="c r" style="left:1242px;width:67px;">0.00</div>
<div class="c" style="left:1311px;width:29px;"></div>
<div class="c" style="left:1342px;width:73px;">XML</div>
<div class="c" style="left:1417px;width:92px;"></div>
</div>
<div class="wl" style="top:324.80px"></div>
<div class="a rb" style="left:262px;top:326.80px;width:1510px;height:16.75px;background:#dce8f6">
<div class="c" style="left:0px;width:91px;">Maingate ...</div>
<div class="c" style="left:93px;width:243px;">The Grand Orlando Resort at Cele...</div>
<div class="c" style="left:338px;width:48px;">3*</div>
<div class="c" style="left:388px;width:92px;">Room Only</div>
<div class="c" style="left:482px;width:111px;">Guest Room</div>
<div class="c" style="left:595px;width:41px;">Sat</div>
<div class="c" style="left:638px;width:83px;">18/06/2022</div>
<div class="c" style="left:723px;width:42px;">Sat</div>
<div class="c" style="left:767px;width:83px;">02/07/2022</div>
<div class="c" style="left:852px;width:76px;">Stuba</div>
<div class="c ce" style="left:930px;width:29px;line-height:15px;"></div>
<div class="c ce" style="left:961px;width:29.5px;line-height:15px;"></div>
<div class="c ce" style="left:992.5px;width:28.5px;line-height:15px;"></div>
<div class="c r" style="left:1023px;width:67px;">523.04</div>
<div class="c r" style="left:1092px;width:66.5px;">130.76</div>
<div class="c r" style="left:1160.5px;width:79.5px;">523.04</div>
<div class="c r" style="left:1242px;width:67px;">0.00</div>
<div class="c" style="left:1311px;width:29px;"></div>
<div class="c" style="left:1342px;width:73px;">XML</div>
<div class="c" style="left:1417px;width:92px;"></div>
</div>
<div class="wl" style="top:343.55px"></div>
<div class="a rb" style="left:262px;top:345.55px;width:1510px;height:16.75px;background:#dce8f6">
<div class="c" style="left:0px;width:91px;">Maingate ...</div>
<div class="c" style="left:93px;width:243px;">Ramada by Wyndham Kissimmee ...</div>
<div class="c" style="left:338px;width:48px;">3*</div>
<div class="c" style="left:388px;width:92px;">Room Only</div>
<div class="c" style="left:482px;width:111px;">Standard Room</div>
<div class="c" style="left:595px;width:41px;">Sat</div>
<div class="c" style="left:638px;width:83px;">18/06/2022</div>
<div class="c" style="left:723px;width:42px;">Sat</div>
<div class="c" style="left:767px;width:83px;">02/07/2022</div>
<div class="c" style="left:852px;width:76px;">Stuba</div>
<div class="c ce" style="left:930px;width:29px;line-height:15px;"></div>
<div class="c ce" style="left:961px;width:29.5px;line-height:15px;"></div>
<div class="c ce" style="left:992.5px;width:28.5px;line-height:15px;"></div>
<div class="c r" style="left:1023px;width:67px;">544.32</div>
<div class="c r" style="left:1092px;width:66.5px;">136.08</div>
<div class="c r" style="left:1160.5px;width:79.5px;">544.32</div>
<div class="c r" style="left:1242px;width:67px;">0.00</div>
<div class="c" style="left:1311px;width:29px;"></div>
<div class="c" style="left:1342px;width:73px;">XML</div>
<div class="c" style="left:1417px;width:92px;"></div>
</div>
<div class="wl" style="top:362.30px"></div>
<div class="a rb" style="left:262px;top:364.30px;width:1510px;height:16.75px;background:#dce8f6">
<div class="c" style="left:0px;width:91px;">Kissimmee ...</div>
<div class="c" style="left:93px;width:243px;">Ramada by Wyndham Kissimmee ...</div>
<div class="c" style="left:338px;width:48px;">3.0</div>
<div class="c" style="left:388px;width:92px;">Room Only</div>
<div class="c" style="left:482px;width:111px;">Standard Inn ...</div>
<div class="c" style="left:595px;width:41px;">Sat</div>
<div class="c" style="left:638px;width:83px;">18/06/2022</div>
<div class="c" style="left:723px;width:42px;">Sat</div>
<div class="c" style="left:767px;width:83px;">02/07/2022</div>
<div class="c" style="left:852px;width:76px;">Ocean B...</div>
<div class="c ce" style="left:930px;width:29px;line-height:15px;">*</div>
<div class="c ce" style="left:961px;width:29.5px;line-height:15px;"></div>
<div class="c ce" style="left:992.5px;width:28.5px;line-height:15px;"></div>
<div class="c r" style="left:1023px;width:67px;">560.60</div>
<div class="c r" style="left:1092px;width:66.5px;">140.15</div>
<div class="c r" style="left:1160.5px;width:79.5px;">560.60</div>
<div class="c r" style="left:1242px;width:67px;">0.00</div>
<div class="c" style="left:1311px;width:29px;"></div>
<div class="c" style="left:1342px;width:73px;">XML</div>
<div class="c" style="left:1417px;width:92px;"></div>
</div>
<div class="wl" style="top:381.05px"></div>
<div class="a rb" style="left:262px;top:383.05px;width:1510px;height:16.75px;background:#dce8f6">
<div class="c" style="left:0px;width:91px;">Kissimmee ...</div>
<div class="c" style="left:93px;width:243px;">Ramada by Wyndham Kissimmee ...</div>
<div class="c" style="left:338px;width:48px;">3 Stars</div>
<div class="c" style="left:388px;width:92px;">Room Only</div>
<div class="c" style="left:482px;width:111px;">Standar Parki...</div>
<div class="c" style="left:595px;width:41px;">Sat</div>
<div class="c" style="left:638px;width:83px;">18/06/2022</div>
<div class="c" style="left:723px;width:42px;">Sat</div>
<div class="c" style="left:767px;width:83px;">02/07/2022</div>
<div class="c" style="left:852px;width:76px;">Hotelbeds</div>
<div class="c ce" style="left:930px;width:29px;line-height:15px;">*</div>
<div class="c ce" style="left:961px;width:29.5px;line-height:15px;"></div>
<div class="c ce" style="left:992.5px;width:28.5px;line-height:15px;"></div>
<div class="c r" style="left:1023px;width:67px;">565.89</div>
<div class="c r" style="left:1092px;width:66.5px;">141.47</div>
<div class="c r" style="left:1160.5px;width:79.5px;">565.89</div>
<div class="c r" style="left:1242px;width:67px;">0.00</div>
<div class="c" style="left:1311px;width:29px;"></div>
<div class="c" style="left:1342px;width:73px;">XML</div>
<div class="c" style="left:1417px;width:92px;"></div>
</div>
<div class="wl" style="top:399.80px"></div>
<div class="a rb" style="left:262px;top:401.80px;width:1510px;height:16.75px;background:#dce8f6">
<div class="c" style="left:0px;width:91px;">Internation...</div>
<div class="c" style="left:93px;width:243px;">Days Inn by Wyndham Orlando C...</div>
<div class="c" style="left:338px;width:48px;">3 Stars</div>
<div class="c" style="left:388px;width:92px;">Room Only</div>
<div class="c" style="left:482px;width:111px;">Double Stand...</div>
<div class="c" style="left:595px;width:41px;">Sat</div>
<div class="c" style="left:638px;width:83px;">18/06/2022</div>
<div class="c" style="left:723px;width:42px;">Sat</div>
<div class="c" style="left:767px;width:83px;">02/07/2022</div>
<div class="c" style="left:852px;width:76px;">Hotelbeds</div>
<div class="c ce" style="left:930px;width:29px;line-height:15px;">*</div>
<div class="c ce" style="left:961px;width:29.5px;line-height:15px;"></div>
<div class="c ce" style="left:992.5px;width:28.5px;line-height:15px;"></div>
<div class="c r" style="left:1023px;width:67px;">578.95</div>
<div class="c r" style="left:1092px;width:66.5px;">144.74</div>
<div class="c r" style="left:1160.5px;width:79.5px;">578.95</div>
<div class="c r" style="left:1242px;width:67px;">0.00</div>
<div class="c" style="left:1311px;width:29px;"></div>
<div class="c" style="left:1342px;width:73px;">XML</div>
<div class="c" style="left:1417px;width:92px;"></div>
</div>
<div class="wl" style="top:418.55px"></div>
<div class="a rb" style="left:262px;top:420.55px;width:1510px;height:16.75px;background:#dce8f6">
<div class="c" style="left:0px;width:91px;">Kissimmee ...</div>
<div class="c" style="left:93px;width:243px;">Holiday Inn Orlando SW Celebrati...</div>
<div class="c" style="left:338px;width:48px;">3 Stars</div>
<div class="c" style="left:388px;width:92px;">Room Only</div>
<div class="c" style="left:482px;width:111px;">Double Deluxe</div>
<div class="c" style="left:595px;width:41px;">Sat</div>
<div class="c" style="left:638px;width:83px;">18/06/2022</div>
<div class="c" style="left:723px;width:42px;">Sat</div>
<div class="c" style="left:767px;width:83px;">02/07/2022</div>
<div class="c" style="left:852px;width:76px;">Hotelbeds</div>
<div class="c ce" style="left:930px;width:29px;line-height:15px;">*</div>
<div class="c ce" style="left:961px;width:29.5px;line-height:15px;"></div>
<div class="c ce" style="left:992.5px;width:28.5px;line-height:15px;"></div>
<div class="c r" style="left:1023px;width:67px;">625.63</div>
<div class="c r" style="left:1092px;width:66.5px;">156.41</div>
<div class="c r" style="left:1160.5px;width:79.5px;">625.63</div>
<div class="c r" style="left:1242px;width:67px;">0.00</div>
<div class="c" style="left:1311px;width:29px;"></div>
<div class="c" style="left:1342px;width:73px;">XML</div>
<div class="c" style="left:1417px;width:92px;"></div>
</div>
<div class="wl" style="top:437.30px"></div>
<div class="a rb" style="left:262px;top:439.30px;width:1510px;height:16.75px;background:#dce8f6">
<div class="c" style="left:0px;width:91px;">Internation...</div>
<div class="c" style="left:93px;width:243px;">Econo Lodge International Drive ...</div>
<div class="c" style="left:338px;width:48px;">3 Stars</div>
<div class="c" style="left:388px;width:92px;">Room Only</div>
<div class="c" style="left:482px;width:111px;">2 Double Beds...</div>
<div class="c" style="left:595px;width:41px;">Sat</div>
<div class="c" style="left:638px;width:83px;">18/06/2022</div>
<div class="c" style="left:723px;width:42px;">Sat</div>
<div class="c" style="left:767px;width:83px;">02/07/2022</div>
<div class="c" style="left:852px;width:76px;">Hotelbeds</div>
<div class="c ce" style="left:930px;width:29px;line-height:15px;">*</div>
<div class="c ce" style="left:961px;width:29.5px;line-height:15px;"></div>
<div class="c ce" style="left:992.5px;width:28.5px;line-height:15px;"></div>
<div class="c r" style="left:1023px;width:67px;">657.25</div>
<div class="c r" style="left:1092px;width:66.5px;">164.31</div>
<div class="c r" style="left:1160.5px;width:79.5px;">657.25</div>
<div class="c r" style="left:1242px;width:67px;">0.00</div>
<div class="c" style="left:1311px;width:29px;"></div>
<div class="c" style="left:1342px;width:73px;">XML</div>
<div class="c" style="left:1417px;width:92px;"></div>
</div>
<div class="wl" style="top:456.05px"></div>
<div class="a rb" style="left:262px;top:458.05px;width:1510px;height:16.75px;background:#dce8f6">
<div class="c" style="left:0px;width:91px;">Orlando (FL)</div>
<div class="c" style="left:93px;width:243px;">Monumental Movieland Hotel Orl...</div>
<div class="c" style="left:338px;width:48px;">3*</div>
<div class="c" style="left:388px;width:92px;">Room Only</div>
<div class="c" style="left:482px;width:111px;">Standard Dou...</div>
<div class="c" style="left:595px;width:41px;">Sat</div>
<div class="c" style="left:638px;width:83px;">18/06/2022</div>
<div class="c" style="left:723px;width:42px;">Sat</div>
<div class="c" style="left:767px;width:83px;">02/07/2022</div>
<div class="c" style="left:852px;width:76px;">Expedia ...</div>
<div class="c ce" style="left:930px;width:29px;line-height:15px;"></div>
<div class="c ce" style="left:961px;width:29.5px;line-height:15px;">*</div>
<div class="c ce" style="left:992.5px;width:28.5px;line-height:15px;"></div>
<div class="c r" style="left:1023px;width:67px;">674.86</div>
<div class="c r" style="left:1092px;width:66.5px;">168.72</div>
<div class="c r" style="left:1160.5px;width:79.5px;">674.86</div>
<div class="c r" style="left:1242px;width:67px;">0.00</div>
<div class="c" style="left:1311px;width:29px;"></div>
<div class="c" style="left:1342px;width:73px;">XML</div>
<div class="c" style="left:1417px;width:92px;"></div>
</div>
<div class="wl" style="top:474.80px"></div>
<div class="a rb" style="left:262px;top:476.80px;width:1510px;height:16.75px;background:#dce8f6">
<div class="c" style="left:0px;width:91px;">Internation...</div>
<div class="c" style="left:93px;width:243px;">Monumental Movieland</div>
<div class="c" style="left:338px;width:48px;">3 Stars</div>
<div class="c" style="left:388px;width:92px;">Room Only</div>
<div class="c" style="left:482px;width:111px;">Double Stand...</div>
<div class="c" style="left:595px;width:41px;">Sat</div>
<div class="c" style="left:638px;width:83px;">18/06/2022</div>
<div class="c" style="left:723px;width:42px;">Sat</div>
<div class="c" style="left:767px;width:83px;">02/07/2022</div>
<div class="c" style="left:852px;width:76px;">Hotelbeds</div>
<div class="c ce" style="left:930px;width:29px;line-height:15px;">*</div>
<div class="c ce" style="left:961px;width:29.5px;line-height:15px;"></div>
<div class="c ce" style="left:992.5px;width:28.5px;line-height:15px;"></div>
<div class="c r" style="left:1023px;width:67px;">682.19</div>
<div class="c r" style="left:1092px;width:66.5px;">170.55</div>
<div class="c r" style="left:1160.5px;width:79.5px;">682.19</div>
<div class="c r" style="left:1242px;width:67px;">0.00</div>
<div class="c" style="left:1311px;width:29px;"></div>
<div class="c" style="left:1342px;width:73px;">XML</div>
<div class="c" style="left:1417px;width:92px;"></div>
</div>
<div class="wl" style="top:493.55px"></div>
<div class="a" style="left:262px;top:494.65px;width:1611px;height:18.6px;background:#0078d7"></div>
<div class="a rs" style="left:262px;top:495.55px;width:1611px;height:16.75px;background:#0078d7">
<div class="c" style="left:0px;width:91px;">Orlando (FL)</div>
<div class="c" style="left:93px;width:243px;">Avanti International Resort</div>
<div class="c" style="left:338px;width:48px;">3.0</div>
<div class="c" style="left:388px;width:92px;">Room Only</div>
<div class="c" style="left:482px;width:111px;">Deluxe Doubl...</div>
<div class="c" style="left:595px;width:41px;">Sat</div>
<div class="c" style="left:638px;width:83px;">18/06/2022</div>
<div class="c" style="left:723px;width:42px;">Sat</div>
<div class="c" style="left:767px;width:83px;">02/07/2022</div>
<div class="c" style="left:852px;width:76px;">Ocean B...</div>
<div class="c ce" style="left:930px;width:29px;line-height:15px;">*</div>
<div class="c ce" style="left:961px;width:29.5px;line-height:15px;"></div>
<div class="c ce" style="left:992.5px;width:28.5px;line-height:15px;"></div>
<div class="c r" style="left:1023px;width:67px;">697.85</div>
<div class="c r" style="left:1092px;width:66.5px;">174.46</div>
<div class="c r" style="left:1160.5px;width:79.5px;">697.85</div>
<div class="c r" style="left:1242px;width:67px;">0.00</div>
<div class="c" style="left:1311px;width:29px;"></div>
<div class="c" style="left:1342px;width:73px;">XML</div>
<div class="c" style="left:1417px;width:92px;"></div>
</div>
<div class="wl" style="top:512.30px"></div>
<div class="a rb" style="left:262px;top:514.30px;width:1510px;height:16.75px;background:#dce8f6">
<div class="c" style="left:0px;width:91px;">Internation...</div>
<div class="c" style="left:93px;width:243px;">Parc Corniche Condominium Suit...</div>
<div class="c" style="left:338px;width:48px;">3*</div>
<div class="c" style="left:388px;width:92px;">Room Only</div>
<div class="c" style="left:482px;width:111px;">Apt 1 Room (...</div>
<div class="c" style="left:595px;width:41px;">Sat</div>
<div class="c" style="left:638px;width:83px;">18/06/2022</div>
<div class="c" style="left:723px;width:42px;">Sat</div>
<div class="c" style="left:767px;width:83px;">02/07/2022</div>
<div class="c" style="left:852px;width:76px;">Stuba</div>
<div class="c ce" style="left:930px;width:29px;line-height:15px;"></div>
<div class="c ce" style="left:961px;width:29.5px;line-height:15px;"></div>
<div class="c ce" style="left:992.5px;width:28.5px;line-height:15px;"></div>
<div class="c r" style="left:1023px;width:67px;">704.48</div>
<div class="c r" style="left:1092px;width:66.5px;">176.12</div>
<div class="c r" style="left:1160.5px;width:79.5px;">704.48</div>
<div class="c r" style="left:1242px;width:67px;">0.00</div>
<div class="c" style="left:1311px;width:29px;"></div>
<div class="c" style="left:1342px;width:73px;">XML</div>
<div class="c" style="left:1417px;width:92px;"></div>
</div>
<div class="wl" style="top:531.05px"></div>
<div class="a rb" style="left:262px;top:533.05px;width:1510px;height:16.75px;background:#dce8f6">
<div class="c" style="left:0px;width:91px;">Orlando (FL)</div>
<div class="c" style="left:93px;width:243px;">Avanti Palms Resort</div>
<div class="c" style="left:338px;width:48px;">3.0</div>
<div class="c" style="left:388px;width:92px;">Room Only</div>
<div class="c" style="left:482px;width:111px;">Deluxe King</div>
<div class="c" style="left:595px;width:41px;">Sat</div>
<div class="c" style="left:638px;width:83px;">18/06/2022</div>
<div class="c" style="left:723px;width:42px;">Sat</div>
<div class="c" style="left:767px;width:83px;">02/07/2022</div>
<div class="c" style="left:852px;width:76px;">Ocean B...</div>
<div class="c ce" style="left:930px;width:29px;line-height:15px;">*</div>
<div class="c ce" style="left:961px;width:29.5px;line-height:15px;"></div>
<div class="c ce" style="left:992.5px;width:28.5px;line-height:15px;"></div>
<div class="c r" style="left:1023px;width:67px;">707.87</div>
<div class="c r" style="left:1092px;width:66.5px;">176.97</div>
<div class="c r" style="left:1160.5px;width:79.5px;">707.87</div>
<div class="c r" style="left:1242px;width:67px;">0.00</div>
<div class="c" style="left:1311px;width:29px;"></div>
<div class="c" style="left:1342px;width:73px;">XML</div>
<div class="c" style="left:1417px;width:92px;"></div>
</div>
<div class="wl" style="top:549.80px"></div>
<div class="a rb" style="left:262px;top:551.80px;width:1510px;height:16.75px;background:#dce8f6">
<div class="c" style="left:0px;width:91px;">Kissimmee ...</div>
<div class="c" style="left:93px;width:243px;">Clarion Suites Maingate</div>
<div class="c" style="left:338px;width:48px;">3 Sta...</div>
<div class="c" style="left:388px;width:92px;">Room Only</div>
<div class="c" style="left:482px;width:111px;">2 Queen Beds,...</div>
<div class="c" style="left:595px;width:41px;">Sat</div>
<div class="c" style="left:638px;width:83px;">18/06/2022</div>
<div class="c" style="left:723px;width:42px;">Sat</div>
<div class="c" style="left:767px;width:83px;">02/07/2022</div>
<div class="c" style="left:852px;width:76px;">Hotelbeds</div>
<div class="c ce" style="left:930px;width:29px;line-height:15px;">*</div>
<div class="c ce" style="left:961px;width:29.5px;line-height:15px;"></div>
<div class="c ce" style="left:992.5px;width:28.5px;line-height:15px;"></div>
<div class="c r" style="left:1023px;width:67px;">713.29</div>
<div class="c r" style="left:1092px;width:66.5px;">178.32</div>
<div class="c r" style="left:1160.5px;width:79.5px;">713.29</div>
<div class="c r" style="left:1242px;width:67px;">0.00</div>
<div class="c" style="left:1311px;width:29px;"></div>
<div class="c" style="left:1342px;width:73px;">XML</div>
<div class="c" style="left:1417px;width:92px;"></div>
</div>
<div class="wl" style="top:568.55px"></div>
<div class="a rg" style="left:262px;top:570.55px;width:1510px;height:16.75px;background:#dce8f6">
<div class="c" style="left:0px;width:91px;">Cocoa (FL)</div>
<div class="c" style="left:93px;width:243px;">Budget Inn Cocoa I 95</div>
<div class="c" style="left:338px;width:48px;">3 Stars</div>
<div class="c" style="left:388px;width:92px;">Room Only</div>
<div class="c" style="left:482px;width:111px;">Quadruple Tw...</div>
<div class="c" style="left:595px;width:41px;">Sat</div>
<div class="c" style="left:638px;width:83px;">18/06/2022</div>
<div class="c" style="left:723px;width:42px;">Sat</div>
<div class="c" style="left:767px;width:83px;">02/07/2022</div>
<div class="c" style="left:852px;width:76px;">Hotelbeds</div>
<div class="c ce" style="left:930px;width:29px;line-height:15px;">*</div>
<div class="c ce" style="left:961px;width:29.5px;line-height:15px;"></div>
<div class="c ce" style="left:992.5px;width:28.5px;line-height:15px;"></div>
<div class="c r" style="left:1023px;width:67px;">714.23</div>
<div class="c r" style="left:1092px;width:66.5px;">178.56</div>
<div class="c r" style="left:1160.5px;width:79.5px;">714.23</div>
<div class="c r" style="left:1242px;width:67px;">0.00</div>
<div class="c" style="left:1311px;width:29px;"></div>
<div class="c" style="left:1342px;width:73px;">XML</div>
<div class="c" style="left:1417px;width:92px;"></div>
</div>
<div class="wl" style="top:587.30px"></div>
<div class="a rb" style="left:262px;top:589.30px;width:1510px;height:16.75px;background:#dce8f6">
<div class="c" style="left:0px;width:91px;">Internation...</div>
<div class="c" style="left:93px;width:243px;">Parc Corniche Condominium Res...</div>
<div class="c" style="left:338px;width:48px;">3 (st...</div>
<div class="c" style="left:388px;width:92px;">Room Only</div>
<div class="c" style="left:482px;width:111px;">One Bedroom...</div>
<div class="c" style="left:595px;width:41px;">Sat</div>
<div class="c" style="left:638px;width:83px;">18/06/2022</div>
<div class="c" style="left:723px;width:42px;">Sat</div>
<div class="c" style="left:767px;width:83px;">02/07/2022</div>
<div class="c" style="left:852px;width:76px;">Yalago</div>
<div class="c ce" style="left:930px;width:29px;line-height:15px;"></div>
<div class="c ce" style="left:961px;width:29.5px;line-height:15px;"></div>
<div class="c ce" style="left:992.5px;width:28.5px;line-height:15px;"></div>
<div class="c r" style="left:1023px;width:67px;">718.65</div>
<div class="c r" style="left:1092px;width:66.5px;">179.66</div>
<div class="c r" style="left:1160.5px;width:79.5px;">718.65</div>
<div class="c r" style="left:1242px;width:67px;">0.00</div>
<div class="c" style="left:1311px;width:29px;"></div>
<div class="c" style="left:1342px;width:73px;">XML</div>
<div class="c" style="left:1417px;width:92px;"></div>
</div>
<div class="wl" style="top:606.05px"></div>
<div class="a rb" style="left:262px;top:608.05px;width:1510px;height:16.75px;background:#dce8f6">
<div class="c" style="left:0px;width:91px;">Universal S...</div>
<div class="c" style="left:93px;width:243px;">Monumental Movieland Hotel Orl...</div>
<div class="c" style="left:338px;width:48px;">3*</div>
<div class="c" style="left:388px;width:92px;">Room Only</div>
<div class="c" style="left:482px;width:111px;">Double Stand...</div>
<div class="c" style="left:595px;width:41px;">Sat</div>
<div class="c" style="left:638px;width:83px;">18/06/2022</div>
<div class="c" style="left:723px;width:42px;">Sat</div>
<div class="c" style="left:767px;width:83px;">02/07/2022</div>
<div class="c" style="left:852px;width:76px;">Stuba</div>
<div class="c ce" style="left:930px;width:29px;line-height:15px;"></div>
<div class="c ce" style="left:961px;width:29.5px;line-height:15px;"></div>
<div class="c ce" style="left:992.5px;width:28.5px;line-height:15px;"></div>
<div class="c r" style="left:1023px;width:67px;">724.08</div>
<div class="c r" style="left:1092px;width:66.5px;">181.02</div>
<div class="c r" style="left:1160.5px;width:79.5px;">724.08</div>
<div class="c r" style="left:1242px;width:67px;">0.00</div>
<div class="c" style="left:1311px;width:29px;"></div>
<div class="c" style="left:1342px;width:73px;">XML</div>
<div class="c" style="left:1417px;width:92px;"></div>
</div>
<div class="wl" style="top:624.80px"></div>
<div class="a rb" style="left:262px;top:626.80px;width:1510px;height:16.75px;background:#dce8f6">
<div class="c" style="left:0px;width:91px;">Kissimmee ...</div>
<div class="c" style="left:93px;width:243px;">Oneway Fundamental</div>
<div class="c" style="left:338px;width:48px;">3 Stars</div>
<div class="c" style="left:388px;width:92px;">Room Only</div>
<div class="c" style="left:482px;width:111px;">Double Stand...</div>
<div class="c" style="left:595px;width:41px;">Sat</div>
<div class="c" style="left:638px;width:83px;">18/06/2022</div>
<div class="c" style="left:723px;width:42px;">Sat</div>
<div class="c" style="left:767px;width:83px;">02/07/2022</div>
<div class="c" style="left:852px;width:76px;">Hotelbeds</div>
<div class="c ce" style="left:930px;width:29px;line-height:15px;">*</div>
<div class="c ce" style="left:961px;width:29.5px;line-height:15px;"></div>
<div class="c ce" style="left:992.5px;width:28.5px;line-height:15px;"></div>
<div class="c r" style="left:1023px;width:67px;">729.39</div>
<div class="c r" style="left:1092px;width:66.5px;">182.35</div>
<div class="c r" style="left:1160.5px;width:79.5px;">729.39</div>
<div class="c r" style="left:1242px;width:67px;">0.00</div>
<div class="c" style="left:1311px;width:29px;"></div>
<div class="c" style="left:1342px;width:73px;">XML</div>
<div class="c" style="left:1417px;width:92px;"></div>
</div>
<div class="wl" style="top:643.55px"></div>
<div class="a rb" style="left:262px;top:645.55px;width:1510px;height:16.75px;background:#dce8f6">
<div class="c" style="left:0px;width:91px;">Internation...</div>
<div class="c" style="left:93px;width:243px;">Avanti Resort International Drive</div>
<div class="c" style="left:338px;width:48px;">3 (st...</div>
<div class="c" style="left:388px;width:92px;">Room Only</div>
<div class="c" style="left:482px;width:111px;">Deluxe Room ...</div>
<div class="c" style="left:595px;width:41px;">Sat</div>
<div class="c" style="left:638px;width:83px;">18/06/2022</div>
<div class="c" style="left:723px;width:42px;">Sat</div>
<div class="c" style="left:767px;width:83px;">02/07/2022</div>
<div class="c" style="left:852px;width:76px;">Yalago</div>
<div class="c ce" style="left:930px;width:29px;line-height:15px;"></div>
<div class="c ce" style="left:961px;width:29.5px;line-height:15px;"></div>
<div class="c ce" style="left:992.5px;width:28.5px;line-height:15px;"></div>
<div class="c r" style="left:1023px;width:67px;">741.76</div>
<div class="c r" style="left:1092px;width:66.5px;">185.44</div>
<div class="c r" style="left:1160.5px;width:79.5px;">741.76</div>
<div class="c r" style="left:1242px;width:67px;">0.00</div>
<div class="c" style="left:1311px;width:29px;"></div>
<div class="c" style="left:1342px;width:73px;">XML</div>
<div class="c" style="left:1417px;width:92px;"></div>
</div>
<div class="wl" style="top:662.30px"></div>
<div class="a rb" style="left:262px;top:664.30px;width:1510px;height:16.75px;background:#dce8f6">
<div class="c" style="left:0px;width:91px;">Internation...</div>
<div class="c" style="left:93px;width:243px;">Avanti Palms Resort And Confere...</div>
<div class="c" style="left:338px;width:48px;">3 (st...</div>
<div class="c" style="left:388px;width:92px;">Room Only</div>
<div class="c" style="left:482px;width:111px;">Deluxe Doubl...</div>
<div class="c" style="left:595px;width:41px;">Sat</div>
<div class="c" style="left:638px;width:83px;">18/06/2022</div>
<div class="c" style="left:723px;width:42px;">Sat</div>
<div class="c" style="left:767px;width:83px;">02/07/2022</div>
<div class="c" style="left:852px;width:76px;">Yalago</div>
<div class="c ce" style="left:930px;width:29px;line-height:15px;"></div>
<div class="c ce" style="left:961px;width:29.5px;line-height:15px;"></div>
<div class="c ce" style="left:992.5px;width:28.5px;line-height:15px;"></div>
<div class="c r" style="left:1023px;width:67px;">741.76</div>
<div class="c r" style="left:1092px;width:66.5px;">185.44</div>
<div class="c r" style="left:1160.5px;width:79.5px;">741.76</div>
<div class="c r" style="left:1242px;width:67px;">0.00</div>
<div class="c" style="left:1311px;width:29px;"></div>
<div class="c" style="left:1342px;width:73px;">XML</div>
<div class="c" style="left:1417px;width:92px;"></div>
</div>
<div class="wl" style="top:681.05px"></div>
<div class="a rb" style="left:262px;top:683.05px;width:1510px;height:16.75px;background:#dce8f6">
<div class="c" style="left:0px;width:91px;">Kissimmee ...</div>
<div class="c" style="left:93px;width:243px;">Red Lion Orlando Lake Buena Vist...</div>
<div class="c" style="left:338px;width:48px;">4 Sta...</div>
<div class="c" style="left:388px;width:92px;">Room Only</div>
<div class="c" style="left:482px;width:111px;">Double Guest ...</div>
<div class="c" style="left:595px;width:41px;">Sat</div>
<div class="c" style="left:638px;width:83px;">18/06/2022</div>
<div class="c" style="left:723px;width:42px;">Sat</div>
<div class="c" style="left:767px;width:83px;">02/07/2022</div>
<div class="c" style="left:852px;width:76px;">Hotelbeds</div>
<div class="c ce" style="left:930px;width:29px;line-height:15px;">*</div>
<div class="c ce" style="left:961px;width:29.5px;line-height:15px;"></div>
<div class="c ce" style="left:992.5px;width:28.5px;line-height:15px;"></div>
<div class="c r" style="left:1023px;width:67px;">748.04</div>
<div class="c r" style="left:1092px;width:66.5px;">187.01</div>
<div class="c r" style="left:1160.5px;width:79.5px;">748.04</div>
<div class="c r" style="left:1242px;width:67px;">0.00</div>
<div class="c" style="left:1311px;width:29px;"></div>
<div class="c" style="left:1342px;width:73px;">XML</div>
<div class="c" style="left:1417px;width:92px;"></div>
</div>
<div class="wl" style="top:699.80px"></div>
<div class="a rg" style="left:262px;top:701.80px;width:1510px;height:16.75px;background:#dce8f6">
<div class="c" style="left:0px;width:91px;">Winter Gar...</div>
<div class="c" style="left:93px;width:243px;">Liki Tiki Village by Diamond Resorts</div>
<div class="c" style="left:338px;width:48px;">3.5*</div>
<div class="c" style="left:388px;width:92px;">Room Only</div>
<div class="c" style="left:482px;width:111px;">Studio, 1 Que...</div>
<div class="c" style="left:595px;width:41px;">Sat</div>
<div class="c" style="left:638px;width:83px;">18/06/2022</div>
<div class="c" style="left:723px;width:42px;">Sat</div>
<div class="c" style="left:767px;width:83px;">02/07/2022</div>
<div class="c" style="left:852px;width:76px;">Expedia ...</div>
<div class="c ce" style="left:930px;width:29px;line-height:15px;"></div>
<div class="c ce" style="left:961px;width:29.5px;line-height:15px;">*</div>
<div class="c ce" style="left:992.5px;width:28.5px;line-height:15px;"></div>
<div class="c r" style="left:1023px;width:67px;">749.96</div>
<div class="c r" style="left:1092px;width:66.5px;">187.49</div>
<div class="c r" style="left:1160.5px;width:79.5px;">749.96</div>
<div class="c r" style="left:1242px;width:67px;">0.00</div>
<div class="c" style="left:1311px;width:29px;"></div>
<div class="c" style="left:1342px;width:73px;">XML</div>
<div class="c" style="left:1417px;width:92px;"></div>
</div>
<div class="wl" style="top:718.55px"></div>
<div class="a rb" style="left:262px;top:720.55px;width:1510px;height:16.75px;background:#dce8f6">
<div class="c" style="left:0px;width:91px;">Orlando (FL)</div>
<div class="c" style="left:93px;width:243px;">GreenPoint Hotel Kissimmee</div>
<div class="c" style="left:338px;width:48px;">3*</div>
<div class="c" style="left:388px;width:92px;">Breakfast</div>
<div class="c" style="left:482px;width:111px;">Eco Room, Tw...</div>
<div class="c" style="left:595px;width:41px;">Sat</div>
<div class="c" style="left:638px;width:83px;">18/06/2022</div>
<div class="c" style="left:723px;width:42px;">Sat</div>
<div class="c" style="left:767px;width:83px;">02/07/2022</div>
<div class="c" style="left:852px;width:76px;">Stuba</div>
<div class="c ce" style="left:930px;width:29px;line-height:15px;"></div>
<div class="c ce" style="left:961px;width:29.5px;line-height:15px;"></div>
<div class="c ce" style="left:992.5px;width:28.5px;line-height:15px;"></div>
<div class="c r" style="left:1023px;width:67px;">750.26</div>
<div class="c r" style="left:1092px;width:66.5px;">187.57</div>
<div class="c r" style="left:1160.5px;width:79.5px;">750.26</div>
<div class="c r" style="left:1242px;width:67px;">0.00</div>
<div class="c" style="left:1311px;width:29px;"></div>
<div class="c" style="left:1342px;width:73px;">XML</div>
<div class="c" style="left:1417px;width:92px;"></div>
</div>
<div class="wl" style="top:737.30px"></div>
<div class="a rb" style="left:262px;top:739.30px;width:1510px;height:16.75px;background:#dce8f6">
<div class="c" style="left:0px;width:91px;">Maingate ...</div>
<div class="c" style="left:93px;width:243px;">Clarion Suites Kissimmee-Orlando...</div>
<div class="c" style="left:338px;width:48px;">3*</div>
<div class="c" style="left:388px;width:92px;">Room Only</div>
<div class="c" style="left:482px;width:111px;">Queen Suite</div>
<div class="c" style="left:595px;width:41px;">Sat</div>
<div class="c" style="left:638px;width:83px;">18/06/2022</div>
<div class="c" style="left:723px;width:42px;">Sat</div>
<div class="c" style="left:767px;width:83px;">02/07/2022</div>
<div class="c" style="left:852px;width:76px;">Stuba</div>
<div class="c ce" style="left:930px;width:29px;line-height:15px;"></div>
<div class="c ce" style="left:961px;width:29.5px;line-height:15px;"></div>
<div class="c ce" style="left:992.5px;width:28.5px;line-height:15px;"></div>
<div class="c r" style="left:1023px;width:67px;">756.84</div>
<div class="c r" style="left:1092px;width:66.5px;">189.21</div>
<div class="c r" style="left:1160.5px;width:79.5px;">756.84</div>
<div class="c r" style="left:1242px;width:67px;">0.00</div>
<div class="c" style="left:1311px;width:29px;"></div>
<div class="c" style="left:1342px;width:73px;">XML</div>
<div class="c" style="left:1417px;width:92px;"></div>
</div>
<div class="wl" style="top:756.05px"></div>
<div class="a rg" style="left:262px;top:758.05px;width:1510px;height:16.75px;background:#dce8f6">
<div class="c" style="left:0px;width:91px;">Orlando (FL)</div>
<div class="c" style="left:93px;width:243px;">Grand Hotel Orlando at Universal ...</div>
<div class="c" style="left:338px;width:48px;">3.5*</div>
<div class="c" style="left:388px;width:92px;">Room Only</div>
<div class="c" style="left:482px;width:111px;">Room, 2 Quee...</div>
<div class="c" style="left:595px;width:41px;">Sat</div>
<div class="c" style="left:638px;width:83px;">18/06/2022</div>
<div class="c" style="left:723px;width:42px;">Sat</div>
<div class="c" style="left:767px;width:83px;">02/07/2022</div>
<div class="c" style="left:852px;width:76px;">Expedia ...</div>
<div class="c ce" style="left:930px;width:29px;line-height:15px;"></div>
<div class="c ce" style="left:961px;width:29.5px;line-height:15px;">*</div>
<div class="c ce" style="left:992.5px;width:28.5px;line-height:15px;"></div>
<div class="c r" style="left:1023px;width:67px;">758.29</div>
<div class="c r" style="left:1092px;width:66.5px;">189.57</div>
<div class="c r" style="left:1160.5px;width:79.5px;">758.29</div>
<div class="c r" style="left:1242px;width:67px;">0.00</div>
<div class="c" style="left:1311px;width:29px;"></div>
<div class="c" style="left:1342px;width:73px;">XML</div>
<div class="c" style="left:1417px;width:92px;"></div>
</div>
<div class="wl" style="top:774.80px"></div>
<div class="a rb" style="left:262px;top:776.80px;width:1510px;height:16.75px;background:#dce8f6">
<div class="c" style="left:0px;width:91px;">Internation...</div>
<div class="c" style="left:93px;width:243px;">Grand Hotel Orlando at Universal ...</div>
<div class="c" style="left:338px;width:48px;">3 Stars</div>
<div class="c" style="left:388px;width:92px;">Buffet Brea...</div>
<div class="c" style="left:482px;width:111px;">Double Stand...</div>
<div class="c" style="left:595px;width:41px;">Sat</div>
<div class="c" style="left:638px;width:83px;">18/06/2022</div>
<div class="c" style="left:723px;width:42px;">Sat</div>
<div class="c" style="left:767px;width:83px;">02/07/2022</div>
<div class="c" style="left:852px;width:76px;">Hotelbeds</div>
<div class="c ce" style="left:930px;width:29px;line-height:15px;">*</div>
<div class="c ce" style="left:961px;width:29.5px;line-height:15px;"></div>
<div class="c ce" style="left:992.5px;width:28.5px;line-height:15px;"></div>
<div class="c r" style="left:1023px;width:67px;">778.74</div>
<div class="c r" style="left:1092px;width:66.5px;">194.69</div>
<div class="c r" style="left:1160.5px;width:79.5px;">778.74</div>
<div class="c r" style="left:1242px;width:67px;">0.00</div>
<div class="c" style="left:1311px;width:29px;"></div>
<div class="c" style="left:1342px;width:73px;">XML</div>
<div class="c" style="left:1417px;width:92px;"></div>
</div>
<div class="wl" style="top:793.55px"></div>
<div class="a rb" style="left:262px;top:795.55px;width:1510px;height:16.75px;background:#dce8f6">
<div class="c" style="left:0px;width:91px;">Internation...</div>
<div class="c" style="left:93px;width:243px;">Quality Inn &amp; Suites Near the The...</div>
<div class="c" style="left:338px;width:48px;">3 Stars</div>
<div class="c" style="left:388px;width:92px;">American ...</div>
<div class="c" style="left:482px;width:111px;">Double Two B...</div>
<div class="c" style="left:595px;width:41px;">Sat</div>
<div class="c" style="left:638px;width:83px;">18/06/2022</div>
<div class="c" style="left:723px;width:42px;">Sat</div>
<div class="c" style="left:767px;width:83px;">02/07/2022</div>
<div class="c" style="left:852px;width:76px;">Hotelbeds</div>
<div class="c ce" style="left:930px;width:29px;line-height:15px;">*</div>
<div class="c ce" style="left:961px;width:29.5px;line-height:15px;"></div>
<div class="c ce" style="left:992.5px;width:28.5px;line-height:15px;"></div>
<div class="c r" style="left:1023px;width:67px;">779.22</div>
<div class="c r" style="left:1092px;width:66.5px;">194.81</div>
<div class="c r" style="left:1160.5px;width:79.5px;">779.22</div>
<div class="c r" style="left:1242px;width:67px;">0.00</div>
<div class="c" style="left:1311px;width:29px;"></div>
<div class="c" style="left:1342px;width:73px;">XML</div>
<div class="c" style="left:1417px;width:92px;"></div>
</div>
<div class="wl" style="top:812.30px"></div>
<div class="a rg" style="left:262px;top:814.30px;width:1510px;height:16.75px;background:#dce8f6">
<div class="c" style="left:0px;width:91px;">Kissimmee ...</div>
<div class="c" style="left:93px;width:243px;">GreenPoint Hotel Kissimmee</div>
<div class="c" style="left:338px;width:48px;">3 Sta...</div>
<div class="c" style="left:388px;width:92px;">Continenta...</div>
<div class="c" style="left:482px;width:111px;">Double Stand...</div>
<div class="c" style="left:595px;width:41px;">Sat</div>
<div class="c" style="left:638px;width:83px;">18/06/2022</div>
<div class="c" style="left:723px;width:42px;">Sat</div>
<div class="c" style="left:767px;width:83px;">02/07/2022</div>
<div class="c" style="left:852px;width:76px;">Hotelbeds</div>
<div class="c ce" style="left:930px;width:29px;line-height:15px;">*</div>
<div class="c ce" style="left:961px;width:29.5px;line-height:15px;"></div>
<div class="c ce" style="left:992.5px;width:28.5px;line-height:15px;"></div>
<div class="c r" style="left:1023px;width:67px;">784.90</div>
<div class="c r" style="left:1092px;width:66.5px;">196.23</div>
<div class="c r" style="left:1160.5px;width:79.5px;">784.90</div>
<div class="c r" style="left:1242px;width:67px;">0.00</div>
<div class="c" style="left:1311px;width:29px;"></div>
<div class="c" style="left:1342px;width:73px;">XML</div>
<div class="c" style="left:1417px;width:92px;"></div>
</div>
<div class="wl" style="top:831.05px"></div>
<div class="a rb" style="left:262px;top:833.05px;width:1510px;height:16.75px;background:#dce8f6">
<div class="c" style="left:0px;width:91px;">Internation...</div>
<div class="c" style="left:93px;width:243px;">La Quinta Inn International Drive ...</div>
<div class="c" style="left:338px;width:48px;">3 Stars</div>
<div class="c" style="left:388px;width:92px;">Continenta...</div>
<div class="c" style="left:482px;width:111px;">Double Two Q...</div>
<div class="c" style="left:595px;width:41px;">Sat</div>
<div class="c" style="left:638px;width:83px;">18/06/2022</div>
<div class="c" style="left:723px;width:42px;">Sat</div>
<div class="c" style="left:767px;width:83px;">02/07/2022</div>
<div class="c" style="left:852px;width:76px;">Hotelbeds</div>
<div class="c ce" style="left:930px;width:29px;line-height:15px;">*</div>
<div class="c ce" style="left:961px;width:29.5px;line-height:15px;"></div>
<div class="c ce" style="left:992.5px;width:28.5px;line-height:15px;"></div>
<div class="c r" style="left:1023px;width:67px;">786.98</div>
<div class="c r" style="left:1092px;width:66.5px;">196.75</div>
<div class="c r" style="left:1160.5px;width:79.5px;">786.98</div>
<div class="c r" style="left:1242px;width:67px;">0.00</div>
<div class="c" style="left:1311px;width:29px;"></div>
<div class="c" style="left:1342px;width:73px;">XML</div>
<div class="c" style="left:1417px;width:92px;"></div>
</div>
<div class="wl" style="top:849.80px"></div>
<div class="a rb" style="left:262px;top:851.80px;width:1510px;height:16.75px;background:#dce8f6">
<div class="c" style="left:0px;width:91px;">Universal S...</div>
<div class="c" style="left:93px;width:243px;">Avanti Palms Resort and Conferen...</div>
<div class="c" style="left:338px;width:48px;">3*</div>
<div class="c" style="left:388px;width:92px;">Room Only</div>
<div class="c" style="left:482px;width:111px;">Deluxe Room</div>
<div class="c" style="left:595px;width:41px;">Sat</div>
<div class="c" style="left:638px;width:83px;">18/06/2022</div>
<div class="c" style="left:723px;width:42px;">Sat</div>
<div class="c" style="left:767px;width:83px;">02/07/2022</div>
<div class="c" style="left:852px;width:76px;">Stuba</div>
<div class="c ce" style="left:930px;width:29px;line-height:15px;"></div>
<div class="c ce" style="left:961px;width:29.5px;line-height:15px;"></div>
<div class="c ce" style="left:992.5px;width:28.5px;line-height:15px;"></div>
<div class="c r" style="left:1023px;width:67px;">792.68</div>
<div class="c r" style="left:1092px;width:66.5px;">198.17</div>
<div class="c r" style="left:1160.5px;width:79.5px;">792.68</div>
<div class="c r" style="left:1242px;width:67px;">0.00</div>
<div class="c" style="left:1311px;width:29px;"></div>
<div class="c" style="left:1342px;width:73px;">XML</div>
<div class="c" style="left:1417px;width:92px;"></div>
</div>
<div class="wl" style="top:868.55px"></div>
<div class="a rb" style="left:262px;top:870.55px;width:1510px;height:16.75px;background:#dce8f6">
<div class="c" style="left:0px;width:91px;">Internation...</div>
<div class="c" style="left:93px;width:243px;">Avanti International Resort</div>
<div class="c" style="left:338px;width:48px;">3*</div>
<div class="c" style="left:388px;width:92px;">Room Only</div>
<div class="c" style="left:482px;width:111px;">Deluxe Room</div>
<div class="c" style="left:595px;width:41px;">Sat</div>
<div class="c" style="left:638px;width:83px;">18/06/2022</div>
<div class="c" style="left:723px;width:42px;">Sat</div>
<div class="c" style="left:767px;width:83px;">02/07/2022</div>
<div class="c" style="left:852px;width:76px;">Stuba</div>
<div class="c ce" style="left:930px;width:29px;line-height:15px;"></div>
<div class="c ce" style="left:961px;width:29.5px;line-height:15px;"></div>
<div class="c ce" style="left:992.5px;width:28.5px;line-height:15px;"></div>
<div class="c r" style="left:1023px;width:67px;">792.68</div>
<div class="c r" style="left:1092px;width:66.5px;">198.17</div>
<div class="c r" style="left:1160.5px;width:79.5px;">792.68</div>
<div class="c r" style="left:1242px;width:67px;">0.00</div>
<div class="c" style="left:1311px;width:29px;"></div>
<div class="c" style="left:1342px;width:73px;">XML</div>
<div class="c" style="left:1417px;width:92px;"></div>
</div>
<div class="wl" style="top:887.30px"></div>
<div class="a rg" style="left:262px;top:889.30px;width:1510px;height:16.75px;background:#dce8f6">
<div class="c" style="left:0px;width:91px;"></div>
<div class="c" style="left:93px;width:243px;"></div>
<div class="c" style="left:338px;width:48px;"></div>
<div class="c" style="left:388px;width:92px;"></div>
<div class="c" style="left:482px;width:111px;"></div>
<div class="c" style="left:595px;width:41px;">Sat</div>
<div class="c" style="left:638px;width:83px;">18/06/2022</div>
<div class="c" style="left:723px;width:42px;">Sat</div>
<div class="c" style="left:767px;width:83px;">02/07/2022</div>
<div class="c" style="left:852px;width:76px;"></div>
<div class="c ce" style="left:930px;width:29px;line-height:15px;"></div>
<div class="c ce" style="left:961px;width:29.5px;line-height:15px;"></div>
<div class="c ce" style="left:992.5px;width:28.5px;line-height:15px;"></div>
<div class="c r" style="left:1023px;width:67px;"></div>
<div class="c r" style="left:1092px;width:66.5px;"></div>
<div class="c r" style="left:1160.5px;width:79.5px;"></div>
<div class="c r" style="left:1242px;width:67px;">0.00</div>
<div class="c" style="left:1311px;width:29px;"></div>
<div class="c" style="left:1342px;width:73px;">XML</div>
<div class="c" style="left:1417px;width:92px;"></div>
</div>
</div>
<div class="a" style="left:259px;top:891px;width:1614px;height:3px;background:#fff"></div>
<div class="a" style="left:1875px;top:191px;width:20px;height:703px;background:#f0f0f0"></div>
<div class="a" style="left:1877px;top:212px;width:17px;height:20px;background:#cdcdcd"></div>
<svg class="a" style="left:1879px;top:197px" width="12" height="9"><path d="M1 7 L6 2 L11 7" stroke="#606060" stroke-width="2" fill="none"/></svg>
<svg class="a" style="left:1879px;top:877px" width="12" height="9"><path d="M1 2 L6 7 L11 2" stroke="#606060" stroke-width="2" fill="none"/></svg>
<div class="t" style="left:265px;top:924px">First portion: 2.1 sec, total search time: 15.2 sec</div>
<div class="t" style="left:1869px;top:923px;font-family:'Liberation Serif',serif;font-weight:bold;font-size:21px;color:#1f58a0">i</div>
<div class="a" style="left:253px;top:954px;width:1644px;height:1px;background:#a0a0a0"></div>
<div class="a" style="left:253px;top:978px;width:1644px;height:3px;background:#b8c8da"></div>
<div class="a" style="left:255px;top:955px;width:74px;height:23px;background:#f0f0f0;border-right:1px solid #b0b0b0;"></div>
<div class="t" style="left:260px;top:957px;color:#111;font-size:14.8px">Summary</div>
<div class="a" style="left:329px;top:955px;width:54px;height:23px;background:#f0f0f0;border-right:1px solid #b0b0b0;"></div>
<div class="t" style="left:334px;top:957px;color:#111;font-size:14.8px">Search</div>
<div class="a" style="left:383px;top:955px;width:117px;height:23px;background:#c3c3fa;"></div>
<div class="t" style="left:388px;top:957px;color:#111;font-size:14.8px">Acc 2A,2C MCO</div>
<div class="a" style="left:500px;top:955px;width:93px;height:23px;background:#000080;"></div>
<div class="t" style="left:505px;top:957px;color:#fff;font-size:14.8px">Acc 4A MCO</div>
<div class="a" style="left:593px;top:955px;width:116px;height:23px;background:#c3c3fa;"></div>
<div class="t" style="left:598px;top:957px;color:#111;font-size:14.8px">Acc 6A,2C MCO</div>
<div class="a" style="left:709px;top:955px;width:136px;height:23px;background:#f0f0f0;border-right:1px solid #b0b0b0;"></div>
<div class="t" style="left:714px;top:957px;color:#111;font-size:14.8px">Financial Summary</div>
<div class="a" style="left:845px;top:955px;width:141px;height:23px;background:#f0f0f0;border-right:1px solid #b0b0b0;"></div>
<div class="t" style="left:850px;top:957px;color:#111;font-size:14.8px">Identity Documents</div>
<div class="t" style="left:212px;top:989px">User: 764 - Stephanie Monks</div>
<div class="t" style="left:411px;top:989px">Retailer: 'Ocean-Florida'</div>
<div class="t" style="left:582px;top:989px">Client: none</div>
<div class="t" style="left:955px;top:989px">14:53 GMT</div>
<div class="t" style="left:1812px;top:989px">401/814</div></body></html>
